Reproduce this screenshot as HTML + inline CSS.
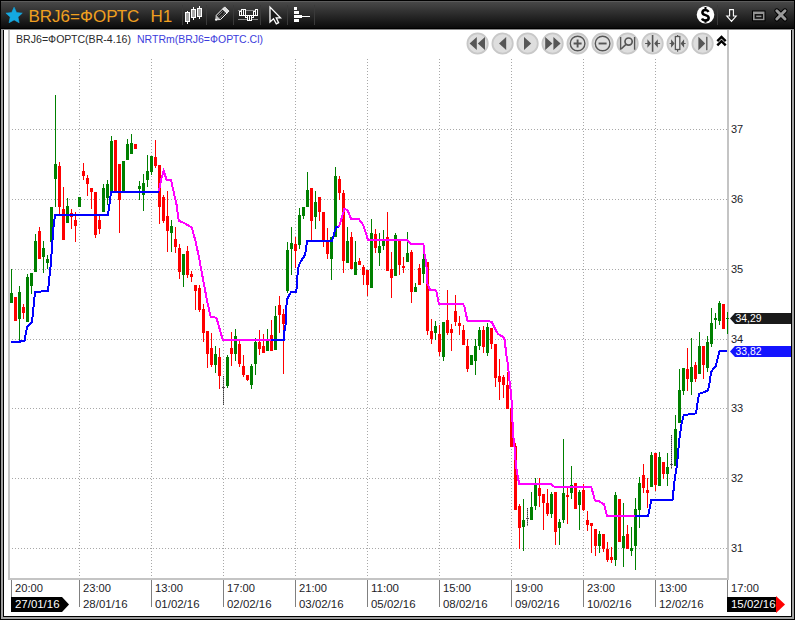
<!DOCTYPE html><html><head><meta charset="utf-8"><style>
html,body{margin:0;padding:0;background:#fff;width:795px;height:620px;overflow:hidden}
svg{display:block}
text{font-family:"Liberation Sans",sans-serif}
</style></head><body>
<svg width="795" height="620" viewBox="0 0 795 620">
<defs><linearGradient id="hg" x1="0" y1="0" x2="0" y2="1"><stop offset="0" stop-color="#4a4a4a"/><stop offset="1" stop-color="#0b0b0b"/></linearGradient></defs>
<rect x="0" y="0" width="795" height="620" fill="#000"/>
<rect x="1" y="29" width="793" height="590" fill="#a0a0a0"/>
<rect x="3" y="29" width="789" height="588" fill="#000"/>
<rect x="4" y="30" width="787" height="586" fill="#fff"/>
<rect x="1" y="29" width="793" height="1" fill="#8c8c8c"/>
<rect x="1" y="1" width="793" height="27" fill="url(#hg)"/>
<rect x="1" y="1" width="793" height="1" fill="#5c5c5c"/>
<rect x="0" y="28" width="795" height="1" fill="#000"/>
<g shape-rendering="crispEdges">
<rect x="8" y="30" width="2" height="550" fill="#c4c4c4"/>
<rect x="8" y="578" width="721" height="2" fill="#c4c4c4"/>
<rect x="727" y="30" width="2" height="550" fill="#c4c4c4"/>
<path d="M79 59h1v1h-1zM79 62h1v1h-1zM79 65h1v1h-1zM79 68h1v1h-1zM79 71h1v1h-1zM79 74h1v1h-1zM79 77h1v1h-1zM79 80h1v1h-1zM79 83h1v1h-1zM79 86h1v1h-1zM79 89h1v1h-1zM79 92h1v1h-1zM79 95h1v1h-1zM79 98h1v1h-1zM79 101h1v1h-1zM79 104h1v1h-1zM79 107h1v1h-1zM79 110h1v1h-1zM79 113h1v1h-1zM79 116h1v1h-1zM79 119h1v1h-1zM79 122h1v1h-1zM79 125h1v1h-1zM79 128h1v1h-1zM79 131h1v1h-1zM79 134h1v1h-1zM79 137h1v1h-1zM79 140h1v1h-1zM79 143h1v1h-1zM79 146h1v1h-1zM79 149h1v1h-1zM79 152h1v1h-1zM79 155h1v1h-1zM79 158h1v1h-1zM79 161h1v1h-1zM79 164h1v1h-1zM79 167h1v1h-1zM79 170h1v1h-1zM79 173h1v1h-1zM79 176h1v1h-1zM79 179h1v1h-1zM79 182h1v1h-1zM79 185h1v1h-1zM79 188h1v1h-1zM79 191h1v1h-1zM79 194h1v1h-1zM79 197h1v1h-1zM79 200h1v1h-1zM79 203h1v1h-1zM79 206h1v1h-1zM79 209h1v1h-1zM79 212h1v1h-1zM79 215h1v1h-1zM79 218h1v1h-1zM79 221h1v1h-1zM79 224h1v1h-1zM79 227h1v1h-1zM79 230h1v1h-1zM79 233h1v1h-1zM79 236h1v1h-1zM79 239h1v1h-1zM79 242h1v1h-1zM79 245h1v1h-1zM79 248h1v1h-1zM79 251h1v1h-1zM79 254h1v1h-1zM79 257h1v1h-1zM79 260h1v1h-1zM79 263h1v1h-1zM79 266h1v1h-1zM79 269h1v1h-1zM79 272h1v1h-1zM79 275h1v1h-1zM79 278h1v1h-1zM79 281h1v1h-1zM79 284h1v1h-1zM79 287h1v1h-1zM79 290h1v1h-1zM79 293h1v1h-1zM79 296h1v1h-1zM79 299h1v1h-1zM79 302h1v1h-1zM79 305h1v1h-1zM79 308h1v1h-1zM79 311h1v1h-1zM79 314h1v1h-1zM79 317h1v1h-1zM79 320h1v1h-1zM79 323h1v1h-1zM79 326h1v1h-1zM79 329h1v1h-1zM79 332h1v1h-1zM79 335h1v1h-1zM79 338h1v1h-1zM79 341h1v1h-1zM79 344h1v1h-1zM79 347h1v1h-1zM79 350h1v1h-1zM79 353h1v1h-1zM79 356h1v1h-1zM79 359h1v1h-1zM79 362h1v1h-1zM79 365h1v1h-1zM79 368h1v1h-1zM79 371h1v1h-1zM79 374h1v1h-1zM79 377h1v1h-1zM79 380h1v1h-1zM79 383h1v1h-1zM79 386h1v1h-1zM79 389h1v1h-1zM79 392h1v1h-1zM79 395h1v1h-1zM79 398h1v1h-1zM79 401h1v1h-1zM79 404h1v1h-1zM79 407h1v1h-1zM79 410h1v1h-1zM79 413h1v1h-1zM79 416h1v1h-1zM79 419h1v1h-1zM79 422h1v1h-1zM79 425h1v1h-1zM79 428h1v1h-1zM79 431h1v1h-1zM79 434h1v1h-1zM79 437h1v1h-1zM79 440h1v1h-1zM79 443h1v1h-1zM79 446h1v1h-1zM79 449h1v1h-1zM79 452h1v1h-1zM79 455h1v1h-1zM79 458h1v1h-1zM79 461h1v1h-1zM79 464h1v1h-1zM79 467h1v1h-1zM79 470h1v1h-1zM79 473h1v1h-1zM79 476h1v1h-1zM79 479h1v1h-1zM79 482h1v1h-1zM79 485h1v1h-1zM79 488h1v1h-1zM79 491h1v1h-1zM79 494h1v1h-1zM79 497h1v1h-1zM79 500h1v1h-1zM79 503h1v1h-1zM79 506h1v1h-1zM79 509h1v1h-1zM79 512h1v1h-1zM79 515h1v1h-1zM79 518h1v1h-1zM79 521h1v1h-1zM79 524h1v1h-1zM79 527h1v1h-1zM79 530h1v1h-1zM79 533h1v1h-1zM79 536h1v1h-1zM79 539h1v1h-1zM79 542h1v1h-1zM79 545h1v1h-1zM79 548h1v1h-1zM79 551h1v1h-1zM79 554h1v1h-1zM79 557h1v1h-1zM79 560h1v1h-1zM79 563h1v1h-1zM79 566h1v1h-1zM79 569h1v1h-1zM79 572h1v1h-1zM79 575h1v1h-1zM151 59h1v1h-1zM151 62h1v1h-1zM151 65h1v1h-1zM151 68h1v1h-1zM151 71h1v1h-1zM151 74h1v1h-1zM151 77h1v1h-1zM151 80h1v1h-1zM151 83h1v1h-1zM151 86h1v1h-1zM151 89h1v1h-1zM151 92h1v1h-1zM151 95h1v1h-1zM151 98h1v1h-1zM151 101h1v1h-1zM151 104h1v1h-1zM151 107h1v1h-1zM151 110h1v1h-1zM151 113h1v1h-1zM151 116h1v1h-1zM151 119h1v1h-1zM151 122h1v1h-1zM151 125h1v1h-1zM151 128h1v1h-1zM151 131h1v1h-1zM151 134h1v1h-1zM151 137h1v1h-1zM151 140h1v1h-1zM151 143h1v1h-1zM151 146h1v1h-1zM151 149h1v1h-1zM151 152h1v1h-1zM151 155h1v1h-1zM151 158h1v1h-1zM151 161h1v1h-1zM151 164h1v1h-1zM151 167h1v1h-1zM151 170h1v1h-1zM151 173h1v1h-1zM151 176h1v1h-1zM151 179h1v1h-1zM151 182h1v1h-1zM151 185h1v1h-1zM151 188h1v1h-1zM151 191h1v1h-1zM151 194h1v1h-1zM151 197h1v1h-1zM151 200h1v1h-1zM151 203h1v1h-1zM151 206h1v1h-1zM151 209h1v1h-1zM151 212h1v1h-1zM151 215h1v1h-1zM151 218h1v1h-1zM151 221h1v1h-1zM151 224h1v1h-1zM151 227h1v1h-1zM151 230h1v1h-1zM151 233h1v1h-1zM151 236h1v1h-1zM151 239h1v1h-1zM151 242h1v1h-1zM151 245h1v1h-1zM151 248h1v1h-1zM151 251h1v1h-1zM151 254h1v1h-1zM151 257h1v1h-1zM151 260h1v1h-1zM151 263h1v1h-1zM151 266h1v1h-1zM151 269h1v1h-1zM151 272h1v1h-1zM151 275h1v1h-1zM151 278h1v1h-1zM151 281h1v1h-1zM151 284h1v1h-1zM151 287h1v1h-1zM151 290h1v1h-1zM151 293h1v1h-1zM151 296h1v1h-1zM151 299h1v1h-1zM151 302h1v1h-1zM151 305h1v1h-1zM151 308h1v1h-1zM151 311h1v1h-1zM151 314h1v1h-1zM151 317h1v1h-1zM151 320h1v1h-1zM151 323h1v1h-1zM151 326h1v1h-1zM151 329h1v1h-1zM151 332h1v1h-1zM151 335h1v1h-1zM151 338h1v1h-1zM151 341h1v1h-1zM151 344h1v1h-1zM151 347h1v1h-1zM151 350h1v1h-1zM151 353h1v1h-1zM151 356h1v1h-1zM151 359h1v1h-1zM151 362h1v1h-1zM151 365h1v1h-1zM151 368h1v1h-1zM151 371h1v1h-1zM151 374h1v1h-1zM151 377h1v1h-1zM151 380h1v1h-1zM151 383h1v1h-1zM151 386h1v1h-1zM151 389h1v1h-1zM151 392h1v1h-1zM151 395h1v1h-1zM151 398h1v1h-1zM151 401h1v1h-1zM151 404h1v1h-1zM151 407h1v1h-1zM151 410h1v1h-1zM151 413h1v1h-1zM151 416h1v1h-1zM151 419h1v1h-1zM151 422h1v1h-1zM151 425h1v1h-1zM151 428h1v1h-1zM151 431h1v1h-1zM151 434h1v1h-1zM151 437h1v1h-1zM151 440h1v1h-1zM151 443h1v1h-1zM151 446h1v1h-1zM151 449h1v1h-1zM151 452h1v1h-1zM151 455h1v1h-1zM151 458h1v1h-1zM151 461h1v1h-1zM151 464h1v1h-1zM151 467h1v1h-1zM151 470h1v1h-1zM151 473h1v1h-1zM151 476h1v1h-1zM151 479h1v1h-1zM151 482h1v1h-1zM151 485h1v1h-1zM151 488h1v1h-1zM151 491h1v1h-1zM151 494h1v1h-1zM151 497h1v1h-1zM151 500h1v1h-1zM151 503h1v1h-1zM151 506h1v1h-1zM151 509h1v1h-1zM151 512h1v1h-1zM151 515h1v1h-1zM151 518h1v1h-1zM151 521h1v1h-1zM151 524h1v1h-1zM151 527h1v1h-1zM151 530h1v1h-1zM151 533h1v1h-1zM151 536h1v1h-1zM151 539h1v1h-1zM151 542h1v1h-1zM151 545h1v1h-1zM151 548h1v1h-1zM151 551h1v1h-1zM151 554h1v1h-1zM151 557h1v1h-1zM151 560h1v1h-1zM151 563h1v1h-1zM151 566h1v1h-1zM151 569h1v1h-1zM151 572h1v1h-1zM151 575h1v1h-1zM223 59h1v1h-1zM223 62h1v1h-1zM223 65h1v1h-1zM223 68h1v1h-1zM223 71h1v1h-1zM223 74h1v1h-1zM223 77h1v1h-1zM223 80h1v1h-1zM223 83h1v1h-1zM223 86h1v1h-1zM223 89h1v1h-1zM223 92h1v1h-1zM223 95h1v1h-1zM223 98h1v1h-1zM223 101h1v1h-1zM223 104h1v1h-1zM223 107h1v1h-1zM223 110h1v1h-1zM223 113h1v1h-1zM223 116h1v1h-1zM223 119h1v1h-1zM223 122h1v1h-1zM223 125h1v1h-1zM223 128h1v1h-1zM223 131h1v1h-1zM223 134h1v1h-1zM223 137h1v1h-1zM223 140h1v1h-1zM223 143h1v1h-1zM223 146h1v1h-1zM223 149h1v1h-1zM223 152h1v1h-1zM223 155h1v1h-1zM223 158h1v1h-1zM223 161h1v1h-1zM223 164h1v1h-1zM223 167h1v1h-1zM223 170h1v1h-1zM223 173h1v1h-1zM223 176h1v1h-1zM223 179h1v1h-1zM223 182h1v1h-1zM223 185h1v1h-1zM223 188h1v1h-1zM223 191h1v1h-1zM223 194h1v1h-1zM223 197h1v1h-1zM223 200h1v1h-1zM223 203h1v1h-1zM223 206h1v1h-1zM223 209h1v1h-1zM223 212h1v1h-1zM223 215h1v1h-1zM223 218h1v1h-1zM223 221h1v1h-1zM223 224h1v1h-1zM223 227h1v1h-1zM223 230h1v1h-1zM223 233h1v1h-1zM223 236h1v1h-1zM223 239h1v1h-1zM223 242h1v1h-1zM223 245h1v1h-1zM223 248h1v1h-1zM223 251h1v1h-1zM223 254h1v1h-1zM223 257h1v1h-1zM223 260h1v1h-1zM223 263h1v1h-1zM223 266h1v1h-1zM223 269h1v1h-1zM223 272h1v1h-1zM223 275h1v1h-1zM223 278h1v1h-1zM223 281h1v1h-1zM223 284h1v1h-1zM223 287h1v1h-1zM223 290h1v1h-1zM223 293h1v1h-1zM223 296h1v1h-1zM223 299h1v1h-1zM223 302h1v1h-1zM223 305h1v1h-1zM223 308h1v1h-1zM223 311h1v1h-1zM223 314h1v1h-1zM223 317h1v1h-1zM223 320h1v1h-1zM223 323h1v1h-1zM223 326h1v1h-1zM223 329h1v1h-1zM223 332h1v1h-1zM223 335h1v1h-1zM223 338h1v1h-1zM223 341h1v1h-1zM223 344h1v1h-1zM223 347h1v1h-1zM223 350h1v1h-1zM223 353h1v1h-1zM223 356h1v1h-1zM223 359h1v1h-1zM223 362h1v1h-1zM223 365h1v1h-1zM223 368h1v1h-1zM223 371h1v1h-1zM223 374h1v1h-1zM223 377h1v1h-1zM223 380h1v1h-1zM223 383h1v1h-1zM223 386h1v1h-1zM223 389h1v1h-1zM223 392h1v1h-1zM223 395h1v1h-1zM223 398h1v1h-1zM223 401h1v1h-1zM223 404h1v1h-1zM223 407h1v1h-1zM223 410h1v1h-1zM223 413h1v1h-1zM223 416h1v1h-1zM223 419h1v1h-1zM223 422h1v1h-1zM223 425h1v1h-1zM223 428h1v1h-1zM223 431h1v1h-1zM223 434h1v1h-1zM223 437h1v1h-1zM223 440h1v1h-1zM223 443h1v1h-1zM223 446h1v1h-1zM223 449h1v1h-1zM223 452h1v1h-1zM223 455h1v1h-1zM223 458h1v1h-1zM223 461h1v1h-1zM223 464h1v1h-1zM223 467h1v1h-1zM223 470h1v1h-1zM223 473h1v1h-1zM223 476h1v1h-1zM223 479h1v1h-1zM223 482h1v1h-1zM223 485h1v1h-1zM223 488h1v1h-1zM223 491h1v1h-1zM223 494h1v1h-1zM223 497h1v1h-1zM223 500h1v1h-1zM223 503h1v1h-1zM223 506h1v1h-1zM223 509h1v1h-1zM223 512h1v1h-1zM223 515h1v1h-1zM223 518h1v1h-1zM223 521h1v1h-1zM223 524h1v1h-1zM223 527h1v1h-1zM223 530h1v1h-1zM223 533h1v1h-1zM223 536h1v1h-1zM223 539h1v1h-1zM223 542h1v1h-1zM223 545h1v1h-1zM223 548h1v1h-1zM223 551h1v1h-1zM223 554h1v1h-1zM223 557h1v1h-1zM223 560h1v1h-1zM223 563h1v1h-1zM223 566h1v1h-1zM223 569h1v1h-1zM223 572h1v1h-1zM223 575h1v1h-1zM295 59h1v1h-1zM295 62h1v1h-1zM295 65h1v1h-1zM295 68h1v1h-1zM295 71h1v1h-1zM295 74h1v1h-1zM295 77h1v1h-1zM295 80h1v1h-1zM295 83h1v1h-1zM295 86h1v1h-1zM295 89h1v1h-1zM295 92h1v1h-1zM295 95h1v1h-1zM295 98h1v1h-1zM295 101h1v1h-1zM295 104h1v1h-1zM295 107h1v1h-1zM295 110h1v1h-1zM295 113h1v1h-1zM295 116h1v1h-1zM295 119h1v1h-1zM295 122h1v1h-1zM295 125h1v1h-1zM295 128h1v1h-1zM295 131h1v1h-1zM295 134h1v1h-1zM295 137h1v1h-1zM295 140h1v1h-1zM295 143h1v1h-1zM295 146h1v1h-1zM295 149h1v1h-1zM295 152h1v1h-1zM295 155h1v1h-1zM295 158h1v1h-1zM295 161h1v1h-1zM295 164h1v1h-1zM295 167h1v1h-1zM295 170h1v1h-1zM295 173h1v1h-1zM295 176h1v1h-1zM295 179h1v1h-1zM295 182h1v1h-1zM295 185h1v1h-1zM295 188h1v1h-1zM295 191h1v1h-1zM295 194h1v1h-1zM295 197h1v1h-1zM295 200h1v1h-1zM295 203h1v1h-1zM295 206h1v1h-1zM295 209h1v1h-1zM295 212h1v1h-1zM295 215h1v1h-1zM295 218h1v1h-1zM295 221h1v1h-1zM295 224h1v1h-1zM295 227h1v1h-1zM295 230h1v1h-1zM295 233h1v1h-1zM295 236h1v1h-1zM295 239h1v1h-1zM295 242h1v1h-1zM295 245h1v1h-1zM295 248h1v1h-1zM295 251h1v1h-1zM295 254h1v1h-1zM295 257h1v1h-1zM295 260h1v1h-1zM295 263h1v1h-1zM295 266h1v1h-1zM295 269h1v1h-1zM295 272h1v1h-1zM295 275h1v1h-1zM295 278h1v1h-1zM295 281h1v1h-1zM295 284h1v1h-1zM295 287h1v1h-1zM295 290h1v1h-1zM295 293h1v1h-1zM295 296h1v1h-1zM295 299h1v1h-1zM295 302h1v1h-1zM295 305h1v1h-1zM295 308h1v1h-1zM295 311h1v1h-1zM295 314h1v1h-1zM295 317h1v1h-1zM295 320h1v1h-1zM295 323h1v1h-1zM295 326h1v1h-1zM295 329h1v1h-1zM295 332h1v1h-1zM295 335h1v1h-1zM295 338h1v1h-1zM295 341h1v1h-1zM295 344h1v1h-1zM295 347h1v1h-1zM295 350h1v1h-1zM295 353h1v1h-1zM295 356h1v1h-1zM295 359h1v1h-1zM295 362h1v1h-1zM295 365h1v1h-1zM295 368h1v1h-1zM295 371h1v1h-1zM295 374h1v1h-1zM295 377h1v1h-1zM295 380h1v1h-1zM295 383h1v1h-1zM295 386h1v1h-1zM295 389h1v1h-1zM295 392h1v1h-1zM295 395h1v1h-1zM295 398h1v1h-1zM295 401h1v1h-1zM295 404h1v1h-1zM295 407h1v1h-1zM295 410h1v1h-1zM295 413h1v1h-1zM295 416h1v1h-1zM295 419h1v1h-1zM295 422h1v1h-1zM295 425h1v1h-1zM295 428h1v1h-1zM295 431h1v1h-1zM295 434h1v1h-1zM295 437h1v1h-1zM295 440h1v1h-1zM295 443h1v1h-1zM295 446h1v1h-1zM295 449h1v1h-1zM295 452h1v1h-1zM295 455h1v1h-1zM295 458h1v1h-1zM295 461h1v1h-1zM295 464h1v1h-1zM295 467h1v1h-1zM295 470h1v1h-1zM295 473h1v1h-1zM295 476h1v1h-1zM295 479h1v1h-1zM295 482h1v1h-1zM295 485h1v1h-1zM295 488h1v1h-1zM295 491h1v1h-1zM295 494h1v1h-1zM295 497h1v1h-1zM295 500h1v1h-1zM295 503h1v1h-1zM295 506h1v1h-1zM295 509h1v1h-1zM295 512h1v1h-1zM295 515h1v1h-1zM295 518h1v1h-1zM295 521h1v1h-1zM295 524h1v1h-1zM295 527h1v1h-1zM295 530h1v1h-1zM295 533h1v1h-1zM295 536h1v1h-1zM295 539h1v1h-1zM295 542h1v1h-1zM295 545h1v1h-1zM295 548h1v1h-1zM295 551h1v1h-1zM295 554h1v1h-1zM295 557h1v1h-1zM295 560h1v1h-1zM295 563h1v1h-1zM295 566h1v1h-1zM295 569h1v1h-1zM295 572h1v1h-1zM295 575h1v1h-1zM367 59h1v1h-1zM367 62h1v1h-1zM367 65h1v1h-1zM367 68h1v1h-1zM367 71h1v1h-1zM367 74h1v1h-1zM367 77h1v1h-1zM367 80h1v1h-1zM367 83h1v1h-1zM367 86h1v1h-1zM367 89h1v1h-1zM367 92h1v1h-1zM367 95h1v1h-1zM367 98h1v1h-1zM367 101h1v1h-1zM367 104h1v1h-1zM367 107h1v1h-1zM367 110h1v1h-1zM367 113h1v1h-1zM367 116h1v1h-1zM367 119h1v1h-1zM367 122h1v1h-1zM367 125h1v1h-1zM367 128h1v1h-1zM367 131h1v1h-1zM367 134h1v1h-1zM367 137h1v1h-1zM367 140h1v1h-1zM367 143h1v1h-1zM367 146h1v1h-1zM367 149h1v1h-1zM367 152h1v1h-1zM367 155h1v1h-1zM367 158h1v1h-1zM367 161h1v1h-1zM367 164h1v1h-1zM367 167h1v1h-1zM367 170h1v1h-1zM367 173h1v1h-1zM367 176h1v1h-1zM367 179h1v1h-1zM367 182h1v1h-1zM367 185h1v1h-1zM367 188h1v1h-1zM367 191h1v1h-1zM367 194h1v1h-1zM367 197h1v1h-1zM367 200h1v1h-1zM367 203h1v1h-1zM367 206h1v1h-1zM367 209h1v1h-1zM367 212h1v1h-1zM367 215h1v1h-1zM367 218h1v1h-1zM367 221h1v1h-1zM367 224h1v1h-1zM367 227h1v1h-1zM367 230h1v1h-1zM367 233h1v1h-1zM367 236h1v1h-1zM367 239h1v1h-1zM367 242h1v1h-1zM367 245h1v1h-1zM367 248h1v1h-1zM367 251h1v1h-1zM367 254h1v1h-1zM367 257h1v1h-1zM367 260h1v1h-1zM367 263h1v1h-1zM367 266h1v1h-1zM367 269h1v1h-1zM367 272h1v1h-1zM367 275h1v1h-1zM367 278h1v1h-1zM367 281h1v1h-1zM367 284h1v1h-1zM367 287h1v1h-1zM367 290h1v1h-1zM367 293h1v1h-1zM367 296h1v1h-1zM367 299h1v1h-1zM367 302h1v1h-1zM367 305h1v1h-1zM367 308h1v1h-1zM367 311h1v1h-1zM367 314h1v1h-1zM367 317h1v1h-1zM367 320h1v1h-1zM367 323h1v1h-1zM367 326h1v1h-1zM367 329h1v1h-1zM367 332h1v1h-1zM367 335h1v1h-1zM367 338h1v1h-1zM367 341h1v1h-1zM367 344h1v1h-1zM367 347h1v1h-1zM367 350h1v1h-1zM367 353h1v1h-1zM367 356h1v1h-1zM367 359h1v1h-1zM367 362h1v1h-1zM367 365h1v1h-1zM367 368h1v1h-1zM367 371h1v1h-1zM367 374h1v1h-1zM367 377h1v1h-1zM367 380h1v1h-1zM367 383h1v1h-1zM367 386h1v1h-1zM367 389h1v1h-1zM367 392h1v1h-1zM367 395h1v1h-1zM367 398h1v1h-1zM367 401h1v1h-1zM367 404h1v1h-1zM367 407h1v1h-1zM367 410h1v1h-1zM367 413h1v1h-1zM367 416h1v1h-1zM367 419h1v1h-1zM367 422h1v1h-1zM367 425h1v1h-1zM367 428h1v1h-1zM367 431h1v1h-1zM367 434h1v1h-1zM367 437h1v1h-1zM367 440h1v1h-1zM367 443h1v1h-1zM367 446h1v1h-1zM367 449h1v1h-1zM367 452h1v1h-1zM367 455h1v1h-1zM367 458h1v1h-1zM367 461h1v1h-1zM367 464h1v1h-1zM367 467h1v1h-1zM367 470h1v1h-1zM367 473h1v1h-1zM367 476h1v1h-1zM367 479h1v1h-1zM367 482h1v1h-1zM367 485h1v1h-1zM367 488h1v1h-1zM367 491h1v1h-1zM367 494h1v1h-1zM367 497h1v1h-1zM367 500h1v1h-1zM367 503h1v1h-1zM367 506h1v1h-1zM367 509h1v1h-1zM367 512h1v1h-1zM367 515h1v1h-1zM367 518h1v1h-1zM367 521h1v1h-1zM367 524h1v1h-1zM367 527h1v1h-1zM367 530h1v1h-1zM367 533h1v1h-1zM367 536h1v1h-1zM367 539h1v1h-1zM367 542h1v1h-1zM367 545h1v1h-1zM367 548h1v1h-1zM367 551h1v1h-1zM367 554h1v1h-1zM367 557h1v1h-1zM367 560h1v1h-1zM367 563h1v1h-1zM367 566h1v1h-1zM367 569h1v1h-1zM367 572h1v1h-1zM367 575h1v1h-1zM439 59h1v1h-1zM439 62h1v1h-1zM439 65h1v1h-1zM439 68h1v1h-1zM439 71h1v1h-1zM439 74h1v1h-1zM439 77h1v1h-1zM439 80h1v1h-1zM439 83h1v1h-1zM439 86h1v1h-1zM439 89h1v1h-1zM439 92h1v1h-1zM439 95h1v1h-1zM439 98h1v1h-1zM439 101h1v1h-1zM439 104h1v1h-1zM439 107h1v1h-1zM439 110h1v1h-1zM439 113h1v1h-1zM439 116h1v1h-1zM439 119h1v1h-1zM439 122h1v1h-1zM439 125h1v1h-1zM439 128h1v1h-1zM439 131h1v1h-1zM439 134h1v1h-1zM439 137h1v1h-1zM439 140h1v1h-1zM439 143h1v1h-1zM439 146h1v1h-1zM439 149h1v1h-1zM439 152h1v1h-1zM439 155h1v1h-1zM439 158h1v1h-1zM439 161h1v1h-1zM439 164h1v1h-1zM439 167h1v1h-1zM439 170h1v1h-1zM439 173h1v1h-1zM439 176h1v1h-1zM439 179h1v1h-1zM439 182h1v1h-1zM439 185h1v1h-1zM439 188h1v1h-1zM439 191h1v1h-1zM439 194h1v1h-1zM439 197h1v1h-1zM439 200h1v1h-1zM439 203h1v1h-1zM439 206h1v1h-1zM439 209h1v1h-1zM439 212h1v1h-1zM439 215h1v1h-1zM439 218h1v1h-1zM439 221h1v1h-1zM439 224h1v1h-1zM439 227h1v1h-1zM439 230h1v1h-1zM439 233h1v1h-1zM439 236h1v1h-1zM439 239h1v1h-1zM439 242h1v1h-1zM439 245h1v1h-1zM439 248h1v1h-1zM439 251h1v1h-1zM439 254h1v1h-1zM439 257h1v1h-1zM439 260h1v1h-1zM439 263h1v1h-1zM439 266h1v1h-1zM439 269h1v1h-1zM439 272h1v1h-1zM439 275h1v1h-1zM439 278h1v1h-1zM439 281h1v1h-1zM439 284h1v1h-1zM439 287h1v1h-1zM439 290h1v1h-1zM439 293h1v1h-1zM439 296h1v1h-1zM439 299h1v1h-1zM439 302h1v1h-1zM439 305h1v1h-1zM439 308h1v1h-1zM439 311h1v1h-1zM439 314h1v1h-1zM439 317h1v1h-1zM439 320h1v1h-1zM439 323h1v1h-1zM439 326h1v1h-1zM439 329h1v1h-1zM439 332h1v1h-1zM439 335h1v1h-1zM439 338h1v1h-1zM439 341h1v1h-1zM439 344h1v1h-1zM439 347h1v1h-1zM439 350h1v1h-1zM439 353h1v1h-1zM439 356h1v1h-1zM439 359h1v1h-1zM439 362h1v1h-1zM439 365h1v1h-1zM439 368h1v1h-1zM439 371h1v1h-1zM439 374h1v1h-1zM439 377h1v1h-1zM439 380h1v1h-1zM439 383h1v1h-1zM439 386h1v1h-1zM439 389h1v1h-1zM439 392h1v1h-1zM439 395h1v1h-1zM439 398h1v1h-1zM439 401h1v1h-1zM439 404h1v1h-1zM439 407h1v1h-1zM439 410h1v1h-1zM439 413h1v1h-1zM439 416h1v1h-1zM439 419h1v1h-1zM439 422h1v1h-1zM439 425h1v1h-1zM439 428h1v1h-1zM439 431h1v1h-1zM439 434h1v1h-1zM439 437h1v1h-1zM439 440h1v1h-1zM439 443h1v1h-1zM439 446h1v1h-1zM439 449h1v1h-1zM439 452h1v1h-1zM439 455h1v1h-1zM439 458h1v1h-1zM439 461h1v1h-1zM439 464h1v1h-1zM439 467h1v1h-1zM439 470h1v1h-1zM439 473h1v1h-1zM439 476h1v1h-1zM439 479h1v1h-1zM439 482h1v1h-1zM439 485h1v1h-1zM439 488h1v1h-1zM439 491h1v1h-1zM439 494h1v1h-1zM439 497h1v1h-1zM439 500h1v1h-1zM439 503h1v1h-1zM439 506h1v1h-1zM439 509h1v1h-1zM439 512h1v1h-1zM439 515h1v1h-1zM439 518h1v1h-1zM439 521h1v1h-1zM439 524h1v1h-1zM439 527h1v1h-1zM439 530h1v1h-1zM439 533h1v1h-1zM439 536h1v1h-1zM439 539h1v1h-1zM439 542h1v1h-1zM439 545h1v1h-1zM439 548h1v1h-1zM439 551h1v1h-1zM439 554h1v1h-1zM439 557h1v1h-1zM439 560h1v1h-1zM439 563h1v1h-1zM439 566h1v1h-1zM439 569h1v1h-1zM439 572h1v1h-1zM439 575h1v1h-1zM511 59h1v1h-1zM511 62h1v1h-1zM511 65h1v1h-1zM511 68h1v1h-1zM511 71h1v1h-1zM511 74h1v1h-1zM511 77h1v1h-1zM511 80h1v1h-1zM511 83h1v1h-1zM511 86h1v1h-1zM511 89h1v1h-1zM511 92h1v1h-1zM511 95h1v1h-1zM511 98h1v1h-1zM511 101h1v1h-1zM511 104h1v1h-1zM511 107h1v1h-1zM511 110h1v1h-1zM511 113h1v1h-1zM511 116h1v1h-1zM511 119h1v1h-1zM511 122h1v1h-1zM511 125h1v1h-1zM511 128h1v1h-1zM511 131h1v1h-1zM511 134h1v1h-1zM511 137h1v1h-1zM511 140h1v1h-1zM511 143h1v1h-1zM511 146h1v1h-1zM511 149h1v1h-1zM511 152h1v1h-1zM511 155h1v1h-1zM511 158h1v1h-1zM511 161h1v1h-1zM511 164h1v1h-1zM511 167h1v1h-1zM511 170h1v1h-1zM511 173h1v1h-1zM511 176h1v1h-1zM511 179h1v1h-1zM511 182h1v1h-1zM511 185h1v1h-1zM511 188h1v1h-1zM511 191h1v1h-1zM511 194h1v1h-1zM511 197h1v1h-1zM511 200h1v1h-1zM511 203h1v1h-1zM511 206h1v1h-1zM511 209h1v1h-1zM511 212h1v1h-1zM511 215h1v1h-1zM511 218h1v1h-1zM511 221h1v1h-1zM511 224h1v1h-1zM511 227h1v1h-1zM511 230h1v1h-1zM511 233h1v1h-1zM511 236h1v1h-1zM511 239h1v1h-1zM511 242h1v1h-1zM511 245h1v1h-1zM511 248h1v1h-1zM511 251h1v1h-1zM511 254h1v1h-1zM511 257h1v1h-1zM511 260h1v1h-1zM511 263h1v1h-1zM511 266h1v1h-1zM511 269h1v1h-1zM511 272h1v1h-1zM511 275h1v1h-1zM511 278h1v1h-1zM511 281h1v1h-1zM511 284h1v1h-1zM511 287h1v1h-1zM511 290h1v1h-1zM511 293h1v1h-1zM511 296h1v1h-1zM511 299h1v1h-1zM511 302h1v1h-1zM511 305h1v1h-1zM511 308h1v1h-1zM511 311h1v1h-1zM511 314h1v1h-1zM511 317h1v1h-1zM511 320h1v1h-1zM511 323h1v1h-1zM511 326h1v1h-1zM511 329h1v1h-1zM511 332h1v1h-1zM511 335h1v1h-1zM511 338h1v1h-1zM511 341h1v1h-1zM511 344h1v1h-1zM511 347h1v1h-1zM511 350h1v1h-1zM511 353h1v1h-1zM511 356h1v1h-1zM511 359h1v1h-1zM511 362h1v1h-1zM511 365h1v1h-1zM511 368h1v1h-1zM511 371h1v1h-1zM511 374h1v1h-1zM511 377h1v1h-1zM511 380h1v1h-1zM511 383h1v1h-1zM511 386h1v1h-1zM511 389h1v1h-1zM511 392h1v1h-1zM511 395h1v1h-1zM511 398h1v1h-1zM511 401h1v1h-1zM511 404h1v1h-1zM511 407h1v1h-1zM511 410h1v1h-1zM511 413h1v1h-1zM511 416h1v1h-1zM511 419h1v1h-1zM511 422h1v1h-1zM511 425h1v1h-1zM511 428h1v1h-1zM511 431h1v1h-1zM511 434h1v1h-1zM511 437h1v1h-1zM511 440h1v1h-1zM511 443h1v1h-1zM511 446h1v1h-1zM511 449h1v1h-1zM511 452h1v1h-1zM511 455h1v1h-1zM511 458h1v1h-1zM511 461h1v1h-1zM511 464h1v1h-1zM511 467h1v1h-1zM511 470h1v1h-1zM511 473h1v1h-1zM511 476h1v1h-1zM511 479h1v1h-1zM511 482h1v1h-1zM511 485h1v1h-1zM511 488h1v1h-1zM511 491h1v1h-1zM511 494h1v1h-1zM511 497h1v1h-1zM511 500h1v1h-1zM511 503h1v1h-1zM511 506h1v1h-1zM511 509h1v1h-1zM511 512h1v1h-1zM511 515h1v1h-1zM511 518h1v1h-1zM511 521h1v1h-1zM511 524h1v1h-1zM511 527h1v1h-1zM511 530h1v1h-1zM511 533h1v1h-1zM511 536h1v1h-1zM511 539h1v1h-1zM511 542h1v1h-1zM511 545h1v1h-1zM511 548h1v1h-1zM511 551h1v1h-1zM511 554h1v1h-1zM511 557h1v1h-1zM511 560h1v1h-1zM511 563h1v1h-1zM511 566h1v1h-1zM511 569h1v1h-1zM511 572h1v1h-1zM511 575h1v1h-1zM583 59h1v1h-1zM583 62h1v1h-1zM583 65h1v1h-1zM583 68h1v1h-1zM583 71h1v1h-1zM583 74h1v1h-1zM583 77h1v1h-1zM583 80h1v1h-1zM583 83h1v1h-1zM583 86h1v1h-1zM583 89h1v1h-1zM583 92h1v1h-1zM583 95h1v1h-1zM583 98h1v1h-1zM583 101h1v1h-1zM583 104h1v1h-1zM583 107h1v1h-1zM583 110h1v1h-1zM583 113h1v1h-1zM583 116h1v1h-1zM583 119h1v1h-1zM583 122h1v1h-1zM583 125h1v1h-1zM583 128h1v1h-1zM583 131h1v1h-1zM583 134h1v1h-1zM583 137h1v1h-1zM583 140h1v1h-1zM583 143h1v1h-1zM583 146h1v1h-1zM583 149h1v1h-1zM583 152h1v1h-1zM583 155h1v1h-1zM583 158h1v1h-1zM583 161h1v1h-1zM583 164h1v1h-1zM583 167h1v1h-1zM583 170h1v1h-1zM583 173h1v1h-1zM583 176h1v1h-1zM583 179h1v1h-1zM583 182h1v1h-1zM583 185h1v1h-1zM583 188h1v1h-1zM583 191h1v1h-1zM583 194h1v1h-1zM583 197h1v1h-1zM583 200h1v1h-1zM583 203h1v1h-1zM583 206h1v1h-1zM583 209h1v1h-1zM583 212h1v1h-1zM583 215h1v1h-1zM583 218h1v1h-1zM583 221h1v1h-1zM583 224h1v1h-1zM583 227h1v1h-1zM583 230h1v1h-1zM583 233h1v1h-1zM583 236h1v1h-1zM583 239h1v1h-1zM583 242h1v1h-1zM583 245h1v1h-1zM583 248h1v1h-1zM583 251h1v1h-1zM583 254h1v1h-1zM583 257h1v1h-1zM583 260h1v1h-1zM583 263h1v1h-1zM583 266h1v1h-1zM583 269h1v1h-1zM583 272h1v1h-1zM583 275h1v1h-1zM583 278h1v1h-1zM583 281h1v1h-1zM583 284h1v1h-1zM583 287h1v1h-1zM583 290h1v1h-1zM583 293h1v1h-1zM583 296h1v1h-1zM583 299h1v1h-1zM583 302h1v1h-1zM583 305h1v1h-1zM583 308h1v1h-1zM583 311h1v1h-1zM583 314h1v1h-1zM583 317h1v1h-1zM583 320h1v1h-1zM583 323h1v1h-1zM583 326h1v1h-1zM583 329h1v1h-1zM583 332h1v1h-1zM583 335h1v1h-1zM583 338h1v1h-1zM583 341h1v1h-1zM583 344h1v1h-1zM583 347h1v1h-1zM583 350h1v1h-1zM583 353h1v1h-1zM583 356h1v1h-1zM583 359h1v1h-1zM583 362h1v1h-1zM583 365h1v1h-1zM583 368h1v1h-1zM583 371h1v1h-1zM583 374h1v1h-1zM583 377h1v1h-1zM583 380h1v1h-1zM583 383h1v1h-1zM583 386h1v1h-1zM583 389h1v1h-1zM583 392h1v1h-1zM583 395h1v1h-1zM583 398h1v1h-1zM583 401h1v1h-1zM583 404h1v1h-1zM583 407h1v1h-1zM583 410h1v1h-1zM583 413h1v1h-1zM583 416h1v1h-1zM583 419h1v1h-1zM583 422h1v1h-1zM583 425h1v1h-1zM583 428h1v1h-1zM583 431h1v1h-1zM583 434h1v1h-1zM583 437h1v1h-1zM583 440h1v1h-1zM583 443h1v1h-1zM583 446h1v1h-1zM583 449h1v1h-1zM583 452h1v1h-1zM583 455h1v1h-1zM583 458h1v1h-1zM583 461h1v1h-1zM583 464h1v1h-1zM583 467h1v1h-1zM583 470h1v1h-1zM583 473h1v1h-1zM583 476h1v1h-1zM583 479h1v1h-1zM583 482h1v1h-1zM583 485h1v1h-1zM583 488h1v1h-1zM583 491h1v1h-1zM583 494h1v1h-1zM583 497h1v1h-1zM583 500h1v1h-1zM583 503h1v1h-1zM583 506h1v1h-1zM583 509h1v1h-1zM583 512h1v1h-1zM583 515h1v1h-1zM583 518h1v1h-1zM583 521h1v1h-1zM583 524h1v1h-1zM583 527h1v1h-1zM583 530h1v1h-1zM583 533h1v1h-1zM583 536h1v1h-1zM583 539h1v1h-1zM583 542h1v1h-1zM583 545h1v1h-1zM583 548h1v1h-1zM583 551h1v1h-1zM583 554h1v1h-1zM583 557h1v1h-1zM583 560h1v1h-1zM583 563h1v1h-1zM583 566h1v1h-1zM583 569h1v1h-1zM583 572h1v1h-1zM583 575h1v1h-1zM655 59h1v1h-1zM655 62h1v1h-1zM655 65h1v1h-1zM655 68h1v1h-1zM655 71h1v1h-1zM655 74h1v1h-1zM655 77h1v1h-1zM655 80h1v1h-1zM655 83h1v1h-1zM655 86h1v1h-1zM655 89h1v1h-1zM655 92h1v1h-1zM655 95h1v1h-1zM655 98h1v1h-1zM655 101h1v1h-1zM655 104h1v1h-1zM655 107h1v1h-1zM655 110h1v1h-1zM655 113h1v1h-1zM655 116h1v1h-1zM655 119h1v1h-1zM655 122h1v1h-1zM655 125h1v1h-1zM655 128h1v1h-1zM655 131h1v1h-1zM655 134h1v1h-1zM655 137h1v1h-1zM655 140h1v1h-1zM655 143h1v1h-1zM655 146h1v1h-1zM655 149h1v1h-1zM655 152h1v1h-1zM655 155h1v1h-1zM655 158h1v1h-1zM655 161h1v1h-1zM655 164h1v1h-1zM655 167h1v1h-1zM655 170h1v1h-1zM655 173h1v1h-1zM655 176h1v1h-1zM655 179h1v1h-1zM655 182h1v1h-1zM655 185h1v1h-1zM655 188h1v1h-1zM655 191h1v1h-1zM655 194h1v1h-1zM655 197h1v1h-1zM655 200h1v1h-1zM655 203h1v1h-1zM655 206h1v1h-1zM655 209h1v1h-1zM655 212h1v1h-1zM655 215h1v1h-1zM655 218h1v1h-1zM655 221h1v1h-1zM655 224h1v1h-1zM655 227h1v1h-1zM655 230h1v1h-1zM655 233h1v1h-1zM655 236h1v1h-1zM655 239h1v1h-1zM655 242h1v1h-1zM655 245h1v1h-1zM655 248h1v1h-1zM655 251h1v1h-1zM655 254h1v1h-1zM655 257h1v1h-1zM655 260h1v1h-1zM655 263h1v1h-1zM655 266h1v1h-1zM655 269h1v1h-1zM655 272h1v1h-1zM655 275h1v1h-1zM655 278h1v1h-1zM655 281h1v1h-1zM655 284h1v1h-1zM655 287h1v1h-1zM655 290h1v1h-1zM655 293h1v1h-1zM655 296h1v1h-1zM655 299h1v1h-1zM655 302h1v1h-1zM655 305h1v1h-1zM655 308h1v1h-1zM655 311h1v1h-1zM655 314h1v1h-1zM655 317h1v1h-1zM655 320h1v1h-1zM655 323h1v1h-1zM655 326h1v1h-1zM655 329h1v1h-1zM655 332h1v1h-1zM655 335h1v1h-1zM655 338h1v1h-1zM655 341h1v1h-1zM655 344h1v1h-1zM655 347h1v1h-1zM655 350h1v1h-1zM655 353h1v1h-1zM655 356h1v1h-1zM655 359h1v1h-1zM655 362h1v1h-1zM655 365h1v1h-1zM655 368h1v1h-1zM655 371h1v1h-1zM655 374h1v1h-1zM655 377h1v1h-1zM655 380h1v1h-1zM655 383h1v1h-1zM655 386h1v1h-1zM655 389h1v1h-1zM655 392h1v1h-1zM655 395h1v1h-1zM655 398h1v1h-1zM655 401h1v1h-1zM655 404h1v1h-1zM655 407h1v1h-1zM655 410h1v1h-1zM655 413h1v1h-1zM655 416h1v1h-1zM655 419h1v1h-1zM655 422h1v1h-1zM655 425h1v1h-1zM655 428h1v1h-1zM655 431h1v1h-1zM655 434h1v1h-1zM655 437h1v1h-1zM655 440h1v1h-1zM655 443h1v1h-1zM655 446h1v1h-1zM655 449h1v1h-1zM655 452h1v1h-1zM655 455h1v1h-1zM655 458h1v1h-1zM655 461h1v1h-1zM655 464h1v1h-1zM655 467h1v1h-1zM655 470h1v1h-1zM655 473h1v1h-1zM655 476h1v1h-1zM655 479h1v1h-1zM655 482h1v1h-1zM655 485h1v1h-1zM655 488h1v1h-1zM655 491h1v1h-1zM655 494h1v1h-1zM655 497h1v1h-1zM655 500h1v1h-1zM655 503h1v1h-1zM655 506h1v1h-1zM655 509h1v1h-1zM655 512h1v1h-1zM655 515h1v1h-1zM655 518h1v1h-1zM655 521h1v1h-1zM655 524h1v1h-1zM655 527h1v1h-1zM655 530h1v1h-1zM655 533h1v1h-1zM655 536h1v1h-1zM655 539h1v1h-1zM655 542h1v1h-1zM655 545h1v1h-1zM655 548h1v1h-1zM655 551h1v1h-1zM655 554h1v1h-1zM655 557h1v1h-1zM655 560h1v1h-1zM655 563h1v1h-1zM655 566h1v1h-1zM655 569h1v1h-1zM655 572h1v1h-1zM655 575h1v1h-1zM12 129h1v1h-1zM15 129h1v1h-1zM18 129h1v1h-1zM21 129h1v1h-1zM24 129h1v1h-1zM27 129h1v1h-1zM30 129h1v1h-1zM33 129h1v1h-1zM36 129h1v1h-1zM39 129h1v1h-1zM42 129h1v1h-1zM45 129h1v1h-1zM48 129h1v1h-1zM51 129h1v1h-1zM54 129h1v1h-1zM57 129h1v1h-1zM60 129h1v1h-1zM63 129h1v1h-1zM66 129h1v1h-1zM69 129h1v1h-1zM72 129h1v1h-1zM75 129h1v1h-1zM78 129h1v1h-1zM81 129h1v1h-1zM84 129h1v1h-1zM87 129h1v1h-1zM90 129h1v1h-1zM93 129h1v1h-1zM96 129h1v1h-1zM99 129h1v1h-1zM102 129h1v1h-1zM105 129h1v1h-1zM108 129h1v1h-1zM111 129h1v1h-1zM114 129h1v1h-1zM117 129h1v1h-1zM120 129h1v1h-1zM123 129h1v1h-1zM126 129h1v1h-1zM129 129h1v1h-1zM132 129h1v1h-1zM135 129h1v1h-1zM138 129h1v1h-1zM141 129h1v1h-1zM144 129h1v1h-1zM147 129h1v1h-1zM150 129h1v1h-1zM153 129h1v1h-1zM156 129h1v1h-1zM159 129h1v1h-1zM162 129h1v1h-1zM165 129h1v1h-1zM168 129h1v1h-1zM171 129h1v1h-1zM174 129h1v1h-1zM177 129h1v1h-1zM180 129h1v1h-1zM183 129h1v1h-1zM186 129h1v1h-1zM189 129h1v1h-1zM192 129h1v1h-1zM195 129h1v1h-1zM198 129h1v1h-1zM201 129h1v1h-1zM204 129h1v1h-1zM207 129h1v1h-1zM210 129h1v1h-1zM213 129h1v1h-1zM216 129h1v1h-1zM219 129h1v1h-1zM222 129h1v1h-1zM225 129h1v1h-1zM228 129h1v1h-1zM231 129h1v1h-1zM234 129h1v1h-1zM237 129h1v1h-1zM240 129h1v1h-1zM243 129h1v1h-1zM246 129h1v1h-1zM249 129h1v1h-1zM252 129h1v1h-1zM255 129h1v1h-1zM258 129h1v1h-1zM261 129h1v1h-1zM264 129h1v1h-1zM267 129h1v1h-1zM270 129h1v1h-1zM273 129h1v1h-1zM276 129h1v1h-1zM279 129h1v1h-1zM282 129h1v1h-1zM285 129h1v1h-1zM288 129h1v1h-1zM291 129h1v1h-1zM294 129h1v1h-1zM297 129h1v1h-1zM300 129h1v1h-1zM303 129h1v1h-1zM306 129h1v1h-1zM309 129h1v1h-1zM312 129h1v1h-1zM315 129h1v1h-1zM318 129h1v1h-1zM321 129h1v1h-1zM324 129h1v1h-1zM327 129h1v1h-1zM330 129h1v1h-1zM333 129h1v1h-1zM336 129h1v1h-1zM339 129h1v1h-1zM342 129h1v1h-1zM345 129h1v1h-1zM348 129h1v1h-1zM351 129h1v1h-1zM354 129h1v1h-1zM357 129h1v1h-1zM360 129h1v1h-1zM363 129h1v1h-1zM366 129h1v1h-1zM369 129h1v1h-1zM372 129h1v1h-1zM375 129h1v1h-1zM378 129h1v1h-1zM381 129h1v1h-1zM384 129h1v1h-1zM387 129h1v1h-1zM390 129h1v1h-1zM393 129h1v1h-1zM396 129h1v1h-1zM399 129h1v1h-1zM402 129h1v1h-1zM405 129h1v1h-1zM408 129h1v1h-1zM411 129h1v1h-1zM414 129h1v1h-1zM417 129h1v1h-1zM420 129h1v1h-1zM423 129h1v1h-1zM426 129h1v1h-1zM429 129h1v1h-1zM432 129h1v1h-1zM435 129h1v1h-1zM438 129h1v1h-1zM441 129h1v1h-1zM444 129h1v1h-1zM447 129h1v1h-1zM450 129h1v1h-1zM453 129h1v1h-1zM456 129h1v1h-1zM459 129h1v1h-1zM462 129h1v1h-1zM465 129h1v1h-1zM468 129h1v1h-1zM471 129h1v1h-1zM474 129h1v1h-1zM477 129h1v1h-1zM480 129h1v1h-1zM483 129h1v1h-1zM486 129h1v1h-1zM489 129h1v1h-1zM492 129h1v1h-1zM495 129h1v1h-1zM498 129h1v1h-1zM501 129h1v1h-1zM504 129h1v1h-1zM507 129h1v1h-1zM510 129h1v1h-1zM513 129h1v1h-1zM516 129h1v1h-1zM519 129h1v1h-1zM522 129h1v1h-1zM525 129h1v1h-1zM528 129h1v1h-1zM531 129h1v1h-1zM534 129h1v1h-1zM537 129h1v1h-1zM540 129h1v1h-1zM543 129h1v1h-1zM546 129h1v1h-1zM549 129h1v1h-1zM552 129h1v1h-1zM555 129h1v1h-1zM558 129h1v1h-1zM561 129h1v1h-1zM564 129h1v1h-1zM567 129h1v1h-1zM570 129h1v1h-1zM573 129h1v1h-1zM576 129h1v1h-1zM579 129h1v1h-1zM582 129h1v1h-1zM585 129h1v1h-1zM588 129h1v1h-1zM591 129h1v1h-1zM594 129h1v1h-1zM597 129h1v1h-1zM600 129h1v1h-1zM603 129h1v1h-1zM606 129h1v1h-1zM609 129h1v1h-1zM612 129h1v1h-1zM615 129h1v1h-1zM618 129h1v1h-1zM621 129h1v1h-1zM624 129h1v1h-1zM627 129h1v1h-1zM630 129h1v1h-1zM633 129h1v1h-1zM636 129h1v1h-1zM639 129h1v1h-1zM642 129h1v1h-1zM645 129h1v1h-1zM648 129h1v1h-1zM651 129h1v1h-1zM654 129h1v1h-1zM657 129h1v1h-1zM660 129h1v1h-1zM663 129h1v1h-1zM666 129h1v1h-1zM669 129h1v1h-1zM672 129h1v1h-1zM675 129h1v1h-1zM678 129h1v1h-1zM681 129h1v1h-1zM684 129h1v1h-1zM687 129h1v1h-1zM690 129h1v1h-1zM693 129h1v1h-1zM696 129h1v1h-1zM699 129h1v1h-1zM702 129h1v1h-1zM705 129h1v1h-1zM708 129h1v1h-1zM711 129h1v1h-1zM714 129h1v1h-1zM717 129h1v1h-1zM720 129h1v1h-1zM723 129h1v1h-1zM726 129h1v1h-1zM12 199h1v1h-1zM15 199h1v1h-1zM18 199h1v1h-1zM21 199h1v1h-1zM24 199h1v1h-1zM27 199h1v1h-1zM30 199h1v1h-1zM33 199h1v1h-1zM36 199h1v1h-1zM39 199h1v1h-1zM42 199h1v1h-1zM45 199h1v1h-1zM48 199h1v1h-1zM51 199h1v1h-1zM54 199h1v1h-1zM57 199h1v1h-1zM60 199h1v1h-1zM63 199h1v1h-1zM66 199h1v1h-1zM69 199h1v1h-1zM72 199h1v1h-1zM75 199h1v1h-1zM78 199h1v1h-1zM81 199h1v1h-1zM84 199h1v1h-1zM87 199h1v1h-1zM90 199h1v1h-1zM93 199h1v1h-1zM96 199h1v1h-1zM99 199h1v1h-1zM102 199h1v1h-1zM105 199h1v1h-1zM108 199h1v1h-1zM111 199h1v1h-1zM114 199h1v1h-1zM117 199h1v1h-1zM120 199h1v1h-1zM123 199h1v1h-1zM126 199h1v1h-1zM129 199h1v1h-1zM132 199h1v1h-1zM135 199h1v1h-1zM138 199h1v1h-1zM141 199h1v1h-1zM144 199h1v1h-1zM147 199h1v1h-1zM150 199h1v1h-1zM153 199h1v1h-1zM156 199h1v1h-1zM159 199h1v1h-1zM162 199h1v1h-1zM165 199h1v1h-1zM168 199h1v1h-1zM171 199h1v1h-1zM174 199h1v1h-1zM177 199h1v1h-1zM180 199h1v1h-1zM183 199h1v1h-1zM186 199h1v1h-1zM189 199h1v1h-1zM192 199h1v1h-1zM195 199h1v1h-1zM198 199h1v1h-1zM201 199h1v1h-1zM204 199h1v1h-1zM207 199h1v1h-1zM210 199h1v1h-1zM213 199h1v1h-1zM216 199h1v1h-1zM219 199h1v1h-1zM222 199h1v1h-1zM225 199h1v1h-1zM228 199h1v1h-1zM231 199h1v1h-1zM234 199h1v1h-1zM237 199h1v1h-1zM240 199h1v1h-1zM243 199h1v1h-1zM246 199h1v1h-1zM249 199h1v1h-1zM252 199h1v1h-1zM255 199h1v1h-1zM258 199h1v1h-1zM261 199h1v1h-1zM264 199h1v1h-1zM267 199h1v1h-1zM270 199h1v1h-1zM273 199h1v1h-1zM276 199h1v1h-1zM279 199h1v1h-1zM282 199h1v1h-1zM285 199h1v1h-1zM288 199h1v1h-1zM291 199h1v1h-1zM294 199h1v1h-1zM297 199h1v1h-1zM300 199h1v1h-1zM303 199h1v1h-1zM306 199h1v1h-1zM309 199h1v1h-1zM312 199h1v1h-1zM315 199h1v1h-1zM318 199h1v1h-1zM321 199h1v1h-1zM324 199h1v1h-1zM327 199h1v1h-1zM330 199h1v1h-1zM333 199h1v1h-1zM336 199h1v1h-1zM339 199h1v1h-1zM342 199h1v1h-1zM345 199h1v1h-1zM348 199h1v1h-1zM351 199h1v1h-1zM354 199h1v1h-1zM357 199h1v1h-1zM360 199h1v1h-1zM363 199h1v1h-1zM366 199h1v1h-1zM369 199h1v1h-1zM372 199h1v1h-1zM375 199h1v1h-1zM378 199h1v1h-1zM381 199h1v1h-1zM384 199h1v1h-1zM387 199h1v1h-1zM390 199h1v1h-1zM393 199h1v1h-1zM396 199h1v1h-1zM399 199h1v1h-1zM402 199h1v1h-1zM405 199h1v1h-1zM408 199h1v1h-1zM411 199h1v1h-1zM414 199h1v1h-1zM417 199h1v1h-1zM420 199h1v1h-1zM423 199h1v1h-1zM426 199h1v1h-1zM429 199h1v1h-1zM432 199h1v1h-1zM435 199h1v1h-1zM438 199h1v1h-1zM441 199h1v1h-1zM444 199h1v1h-1zM447 199h1v1h-1zM450 199h1v1h-1zM453 199h1v1h-1zM456 199h1v1h-1zM459 199h1v1h-1zM462 199h1v1h-1zM465 199h1v1h-1zM468 199h1v1h-1zM471 199h1v1h-1zM474 199h1v1h-1zM477 199h1v1h-1zM480 199h1v1h-1zM483 199h1v1h-1zM486 199h1v1h-1zM489 199h1v1h-1zM492 199h1v1h-1zM495 199h1v1h-1zM498 199h1v1h-1zM501 199h1v1h-1zM504 199h1v1h-1zM507 199h1v1h-1zM510 199h1v1h-1zM513 199h1v1h-1zM516 199h1v1h-1zM519 199h1v1h-1zM522 199h1v1h-1zM525 199h1v1h-1zM528 199h1v1h-1zM531 199h1v1h-1zM534 199h1v1h-1zM537 199h1v1h-1zM540 199h1v1h-1zM543 199h1v1h-1zM546 199h1v1h-1zM549 199h1v1h-1zM552 199h1v1h-1zM555 199h1v1h-1zM558 199h1v1h-1zM561 199h1v1h-1zM564 199h1v1h-1zM567 199h1v1h-1zM570 199h1v1h-1zM573 199h1v1h-1zM576 199h1v1h-1zM579 199h1v1h-1zM582 199h1v1h-1zM585 199h1v1h-1zM588 199h1v1h-1zM591 199h1v1h-1zM594 199h1v1h-1zM597 199h1v1h-1zM600 199h1v1h-1zM603 199h1v1h-1zM606 199h1v1h-1zM609 199h1v1h-1zM612 199h1v1h-1zM615 199h1v1h-1zM618 199h1v1h-1zM621 199h1v1h-1zM624 199h1v1h-1zM627 199h1v1h-1zM630 199h1v1h-1zM633 199h1v1h-1zM636 199h1v1h-1zM639 199h1v1h-1zM642 199h1v1h-1zM645 199h1v1h-1zM648 199h1v1h-1zM651 199h1v1h-1zM654 199h1v1h-1zM657 199h1v1h-1zM660 199h1v1h-1zM663 199h1v1h-1zM666 199h1v1h-1zM669 199h1v1h-1zM672 199h1v1h-1zM675 199h1v1h-1zM678 199h1v1h-1zM681 199h1v1h-1zM684 199h1v1h-1zM687 199h1v1h-1zM690 199h1v1h-1zM693 199h1v1h-1zM696 199h1v1h-1zM699 199h1v1h-1zM702 199h1v1h-1zM705 199h1v1h-1zM708 199h1v1h-1zM711 199h1v1h-1zM714 199h1v1h-1zM717 199h1v1h-1zM720 199h1v1h-1zM723 199h1v1h-1zM726 199h1v1h-1zM12 269h1v1h-1zM15 269h1v1h-1zM18 269h1v1h-1zM21 269h1v1h-1zM24 269h1v1h-1zM27 269h1v1h-1zM30 269h1v1h-1zM33 269h1v1h-1zM36 269h1v1h-1zM39 269h1v1h-1zM42 269h1v1h-1zM45 269h1v1h-1zM48 269h1v1h-1zM51 269h1v1h-1zM54 269h1v1h-1zM57 269h1v1h-1zM60 269h1v1h-1zM63 269h1v1h-1zM66 269h1v1h-1zM69 269h1v1h-1zM72 269h1v1h-1zM75 269h1v1h-1zM78 269h1v1h-1zM81 269h1v1h-1zM84 269h1v1h-1zM87 269h1v1h-1zM90 269h1v1h-1zM93 269h1v1h-1zM96 269h1v1h-1zM99 269h1v1h-1zM102 269h1v1h-1zM105 269h1v1h-1zM108 269h1v1h-1zM111 269h1v1h-1zM114 269h1v1h-1zM117 269h1v1h-1zM120 269h1v1h-1zM123 269h1v1h-1zM126 269h1v1h-1zM129 269h1v1h-1zM132 269h1v1h-1zM135 269h1v1h-1zM138 269h1v1h-1zM141 269h1v1h-1zM144 269h1v1h-1zM147 269h1v1h-1zM150 269h1v1h-1zM153 269h1v1h-1zM156 269h1v1h-1zM159 269h1v1h-1zM162 269h1v1h-1zM165 269h1v1h-1zM168 269h1v1h-1zM171 269h1v1h-1zM174 269h1v1h-1zM177 269h1v1h-1zM180 269h1v1h-1zM183 269h1v1h-1zM186 269h1v1h-1zM189 269h1v1h-1zM192 269h1v1h-1zM195 269h1v1h-1zM198 269h1v1h-1zM201 269h1v1h-1zM204 269h1v1h-1zM207 269h1v1h-1zM210 269h1v1h-1zM213 269h1v1h-1zM216 269h1v1h-1zM219 269h1v1h-1zM222 269h1v1h-1zM225 269h1v1h-1zM228 269h1v1h-1zM231 269h1v1h-1zM234 269h1v1h-1zM237 269h1v1h-1zM240 269h1v1h-1zM243 269h1v1h-1zM246 269h1v1h-1zM249 269h1v1h-1zM252 269h1v1h-1zM255 269h1v1h-1zM258 269h1v1h-1zM261 269h1v1h-1zM264 269h1v1h-1zM267 269h1v1h-1zM270 269h1v1h-1zM273 269h1v1h-1zM276 269h1v1h-1zM279 269h1v1h-1zM282 269h1v1h-1zM285 269h1v1h-1zM288 269h1v1h-1zM291 269h1v1h-1zM294 269h1v1h-1zM297 269h1v1h-1zM300 269h1v1h-1zM303 269h1v1h-1zM306 269h1v1h-1zM309 269h1v1h-1zM312 269h1v1h-1zM315 269h1v1h-1zM318 269h1v1h-1zM321 269h1v1h-1zM324 269h1v1h-1zM327 269h1v1h-1zM330 269h1v1h-1zM333 269h1v1h-1zM336 269h1v1h-1zM339 269h1v1h-1zM342 269h1v1h-1zM345 269h1v1h-1zM348 269h1v1h-1zM351 269h1v1h-1zM354 269h1v1h-1zM357 269h1v1h-1zM360 269h1v1h-1zM363 269h1v1h-1zM366 269h1v1h-1zM369 269h1v1h-1zM372 269h1v1h-1zM375 269h1v1h-1zM378 269h1v1h-1zM381 269h1v1h-1zM384 269h1v1h-1zM387 269h1v1h-1zM390 269h1v1h-1zM393 269h1v1h-1zM396 269h1v1h-1zM399 269h1v1h-1zM402 269h1v1h-1zM405 269h1v1h-1zM408 269h1v1h-1zM411 269h1v1h-1zM414 269h1v1h-1zM417 269h1v1h-1zM420 269h1v1h-1zM423 269h1v1h-1zM426 269h1v1h-1zM429 269h1v1h-1zM432 269h1v1h-1zM435 269h1v1h-1zM438 269h1v1h-1zM441 269h1v1h-1zM444 269h1v1h-1zM447 269h1v1h-1zM450 269h1v1h-1zM453 269h1v1h-1zM456 269h1v1h-1zM459 269h1v1h-1zM462 269h1v1h-1zM465 269h1v1h-1zM468 269h1v1h-1zM471 269h1v1h-1zM474 269h1v1h-1zM477 269h1v1h-1zM480 269h1v1h-1zM483 269h1v1h-1zM486 269h1v1h-1zM489 269h1v1h-1zM492 269h1v1h-1zM495 269h1v1h-1zM498 269h1v1h-1zM501 269h1v1h-1zM504 269h1v1h-1zM507 269h1v1h-1zM510 269h1v1h-1zM513 269h1v1h-1zM516 269h1v1h-1zM519 269h1v1h-1zM522 269h1v1h-1zM525 269h1v1h-1zM528 269h1v1h-1zM531 269h1v1h-1zM534 269h1v1h-1zM537 269h1v1h-1zM540 269h1v1h-1zM543 269h1v1h-1zM546 269h1v1h-1zM549 269h1v1h-1zM552 269h1v1h-1zM555 269h1v1h-1zM558 269h1v1h-1zM561 269h1v1h-1zM564 269h1v1h-1zM567 269h1v1h-1zM570 269h1v1h-1zM573 269h1v1h-1zM576 269h1v1h-1zM579 269h1v1h-1zM582 269h1v1h-1zM585 269h1v1h-1zM588 269h1v1h-1zM591 269h1v1h-1zM594 269h1v1h-1zM597 269h1v1h-1zM600 269h1v1h-1zM603 269h1v1h-1zM606 269h1v1h-1zM609 269h1v1h-1zM612 269h1v1h-1zM615 269h1v1h-1zM618 269h1v1h-1zM621 269h1v1h-1zM624 269h1v1h-1zM627 269h1v1h-1zM630 269h1v1h-1zM633 269h1v1h-1zM636 269h1v1h-1zM639 269h1v1h-1zM642 269h1v1h-1zM645 269h1v1h-1zM648 269h1v1h-1zM651 269h1v1h-1zM654 269h1v1h-1zM657 269h1v1h-1zM660 269h1v1h-1zM663 269h1v1h-1zM666 269h1v1h-1zM669 269h1v1h-1zM672 269h1v1h-1zM675 269h1v1h-1zM678 269h1v1h-1zM681 269h1v1h-1zM684 269h1v1h-1zM687 269h1v1h-1zM690 269h1v1h-1zM693 269h1v1h-1zM696 269h1v1h-1zM699 269h1v1h-1zM702 269h1v1h-1zM705 269h1v1h-1zM708 269h1v1h-1zM711 269h1v1h-1zM714 269h1v1h-1zM717 269h1v1h-1zM720 269h1v1h-1zM723 269h1v1h-1zM726 269h1v1h-1zM12 339h1v1h-1zM15 339h1v1h-1zM18 339h1v1h-1zM21 339h1v1h-1zM24 339h1v1h-1zM27 339h1v1h-1zM30 339h1v1h-1zM33 339h1v1h-1zM36 339h1v1h-1zM39 339h1v1h-1zM42 339h1v1h-1zM45 339h1v1h-1zM48 339h1v1h-1zM51 339h1v1h-1zM54 339h1v1h-1zM57 339h1v1h-1zM60 339h1v1h-1zM63 339h1v1h-1zM66 339h1v1h-1zM69 339h1v1h-1zM72 339h1v1h-1zM75 339h1v1h-1zM78 339h1v1h-1zM81 339h1v1h-1zM84 339h1v1h-1zM87 339h1v1h-1zM90 339h1v1h-1zM93 339h1v1h-1zM96 339h1v1h-1zM99 339h1v1h-1zM102 339h1v1h-1zM105 339h1v1h-1zM108 339h1v1h-1zM111 339h1v1h-1zM114 339h1v1h-1zM117 339h1v1h-1zM120 339h1v1h-1zM123 339h1v1h-1zM126 339h1v1h-1zM129 339h1v1h-1zM132 339h1v1h-1zM135 339h1v1h-1zM138 339h1v1h-1zM141 339h1v1h-1zM144 339h1v1h-1zM147 339h1v1h-1zM150 339h1v1h-1zM153 339h1v1h-1zM156 339h1v1h-1zM159 339h1v1h-1zM162 339h1v1h-1zM165 339h1v1h-1zM168 339h1v1h-1zM171 339h1v1h-1zM174 339h1v1h-1zM177 339h1v1h-1zM180 339h1v1h-1zM183 339h1v1h-1zM186 339h1v1h-1zM189 339h1v1h-1zM192 339h1v1h-1zM195 339h1v1h-1zM198 339h1v1h-1zM201 339h1v1h-1zM204 339h1v1h-1zM207 339h1v1h-1zM210 339h1v1h-1zM213 339h1v1h-1zM216 339h1v1h-1zM219 339h1v1h-1zM222 339h1v1h-1zM225 339h1v1h-1zM228 339h1v1h-1zM231 339h1v1h-1zM234 339h1v1h-1zM237 339h1v1h-1zM240 339h1v1h-1zM243 339h1v1h-1zM246 339h1v1h-1zM249 339h1v1h-1zM252 339h1v1h-1zM255 339h1v1h-1zM258 339h1v1h-1zM261 339h1v1h-1zM264 339h1v1h-1zM267 339h1v1h-1zM270 339h1v1h-1zM273 339h1v1h-1zM276 339h1v1h-1zM279 339h1v1h-1zM282 339h1v1h-1zM285 339h1v1h-1zM288 339h1v1h-1zM291 339h1v1h-1zM294 339h1v1h-1zM297 339h1v1h-1zM300 339h1v1h-1zM303 339h1v1h-1zM306 339h1v1h-1zM309 339h1v1h-1zM312 339h1v1h-1zM315 339h1v1h-1zM318 339h1v1h-1zM321 339h1v1h-1zM324 339h1v1h-1zM327 339h1v1h-1zM330 339h1v1h-1zM333 339h1v1h-1zM336 339h1v1h-1zM339 339h1v1h-1zM342 339h1v1h-1zM345 339h1v1h-1zM348 339h1v1h-1zM351 339h1v1h-1zM354 339h1v1h-1zM357 339h1v1h-1zM360 339h1v1h-1zM363 339h1v1h-1zM366 339h1v1h-1zM369 339h1v1h-1zM372 339h1v1h-1zM375 339h1v1h-1zM378 339h1v1h-1zM381 339h1v1h-1zM384 339h1v1h-1zM387 339h1v1h-1zM390 339h1v1h-1zM393 339h1v1h-1zM396 339h1v1h-1zM399 339h1v1h-1zM402 339h1v1h-1zM405 339h1v1h-1zM408 339h1v1h-1zM411 339h1v1h-1zM414 339h1v1h-1zM417 339h1v1h-1zM420 339h1v1h-1zM423 339h1v1h-1zM426 339h1v1h-1zM429 339h1v1h-1zM432 339h1v1h-1zM435 339h1v1h-1zM438 339h1v1h-1zM441 339h1v1h-1zM444 339h1v1h-1zM447 339h1v1h-1zM450 339h1v1h-1zM453 339h1v1h-1zM456 339h1v1h-1zM459 339h1v1h-1zM462 339h1v1h-1zM465 339h1v1h-1zM468 339h1v1h-1zM471 339h1v1h-1zM474 339h1v1h-1zM477 339h1v1h-1zM480 339h1v1h-1zM483 339h1v1h-1zM486 339h1v1h-1zM489 339h1v1h-1zM492 339h1v1h-1zM495 339h1v1h-1zM498 339h1v1h-1zM501 339h1v1h-1zM504 339h1v1h-1zM507 339h1v1h-1zM510 339h1v1h-1zM513 339h1v1h-1zM516 339h1v1h-1zM519 339h1v1h-1zM522 339h1v1h-1zM525 339h1v1h-1zM528 339h1v1h-1zM531 339h1v1h-1zM534 339h1v1h-1zM537 339h1v1h-1zM540 339h1v1h-1zM543 339h1v1h-1zM546 339h1v1h-1zM549 339h1v1h-1zM552 339h1v1h-1zM555 339h1v1h-1zM558 339h1v1h-1zM561 339h1v1h-1zM564 339h1v1h-1zM567 339h1v1h-1zM570 339h1v1h-1zM573 339h1v1h-1zM576 339h1v1h-1zM579 339h1v1h-1zM582 339h1v1h-1zM585 339h1v1h-1zM588 339h1v1h-1zM591 339h1v1h-1zM594 339h1v1h-1zM597 339h1v1h-1zM600 339h1v1h-1zM603 339h1v1h-1zM606 339h1v1h-1zM609 339h1v1h-1zM612 339h1v1h-1zM615 339h1v1h-1zM618 339h1v1h-1zM621 339h1v1h-1zM624 339h1v1h-1zM627 339h1v1h-1zM630 339h1v1h-1zM633 339h1v1h-1zM636 339h1v1h-1zM639 339h1v1h-1zM642 339h1v1h-1zM645 339h1v1h-1zM648 339h1v1h-1zM651 339h1v1h-1zM654 339h1v1h-1zM657 339h1v1h-1zM660 339h1v1h-1zM663 339h1v1h-1zM666 339h1v1h-1zM669 339h1v1h-1zM672 339h1v1h-1zM675 339h1v1h-1zM678 339h1v1h-1zM681 339h1v1h-1zM684 339h1v1h-1zM687 339h1v1h-1zM690 339h1v1h-1zM693 339h1v1h-1zM696 339h1v1h-1zM699 339h1v1h-1zM702 339h1v1h-1zM705 339h1v1h-1zM708 339h1v1h-1zM711 339h1v1h-1zM714 339h1v1h-1zM717 339h1v1h-1zM720 339h1v1h-1zM723 339h1v1h-1zM726 339h1v1h-1zM12 408h1v1h-1zM15 408h1v1h-1zM18 408h1v1h-1zM21 408h1v1h-1zM24 408h1v1h-1zM27 408h1v1h-1zM30 408h1v1h-1zM33 408h1v1h-1zM36 408h1v1h-1zM39 408h1v1h-1zM42 408h1v1h-1zM45 408h1v1h-1zM48 408h1v1h-1zM51 408h1v1h-1zM54 408h1v1h-1zM57 408h1v1h-1zM60 408h1v1h-1zM63 408h1v1h-1zM66 408h1v1h-1zM69 408h1v1h-1zM72 408h1v1h-1zM75 408h1v1h-1zM78 408h1v1h-1zM81 408h1v1h-1zM84 408h1v1h-1zM87 408h1v1h-1zM90 408h1v1h-1zM93 408h1v1h-1zM96 408h1v1h-1zM99 408h1v1h-1zM102 408h1v1h-1zM105 408h1v1h-1zM108 408h1v1h-1zM111 408h1v1h-1zM114 408h1v1h-1zM117 408h1v1h-1zM120 408h1v1h-1zM123 408h1v1h-1zM126 408h1v1h-1zM129 408h1v1h-1zM132 408h1v1h-1zM135 408h1v1h-1zM138 408h1v1h-1zM141 408h1v1h-1zM144 408h1v1h-1zM147 408h1v1h-1zM150 408h1v1h-1zM153 408h1v1h-1zM156 408h1v1h-1zM159 408h1v1h-1zM162 408h1v1h-1zM165 408h1v1h-1zM168 408h1v1h-1zM171 408h1v1h-1zM174 408h1v1h-1zM177 408h1v1h-1zM180 408h1v1h-1zM183 408h1v1h-1zM186 408h1v1h-1zM189 408h1v1h-1zM192 408h1v1h-1zM195 408h1v1h-1zM198 408h1v1h-1zM201 408h1v1h-1zM204 408h1v1h-1zM207 408h1v1h-1zM210 408h1v1h-1zM213 408h1v1h-1zM216 408h1v1h-1zM219 408h1v1h-1zM222 408h1v1h-1zM225 408h1v1h-1zM228 408h1v1h-1zM231 408h1v1h-1zM234 408h1v1h-1zM237 408h1v1h-1zM240 408h1v1h-1zM243 408h1v1h-1zM246 408h1v1h-1zM249 408h1v1h-1zM252 408h1v1h-1zM255 408h1v1h-1zM258 408h1v1h-1zM261 408h1v1h-1zM264 408h1v1h-1zM267 408h1v1h-1zM270 408h1v1h-1zM273 408h1v1h-1zM276 408h1v1h-1zM279 408h1v1h-1zM282 408h1v1h-1zM285 408h1v1h-1zM288 408h1v1h-1zM291 408h1v1h-1zM294 408h1v1h-1zM297 408h1v1h-1zM300 408h1v1h-1zM303 408h1v1h-1zM306 408h1v1h-1zM309 408h1v1h-1zM312 408h1v1h-1zM315 408h1v1h-1zM318 408h1v1h-1zM321 408h1v1h-1zM324 408h1v1h-1zM327 408h1v1h-1zM330 408h1v1h-1zM333 408h1v1h-1zM336 408h1v1h-1zM339 408h1v1h-1zM342 408h1v1h-1zM345 408h1v1h-1zM348 408h1v1h-1zM351 408h1v1h-1zM354 408h1v1h-1zM357 408h1v1h-1zM360 408h1v1h-1zM363 408h1v1h-1zM366 408h1v1h-1zM369 408h1v1h-1zM372 408h1v1h-1zM375 408h1v1h-1zM378 408h1v1h-1zM381 408h1v1h-1zM384 408h1v1h-1zM387 408h1v1h-1zM390 408h1v1h-1zM393 408h1v1h-1zM396 408h1v1h-1zM399 408h1v1h-1zM402 408h1v1h-1zM405 408h1v1h-1zM408 408h1v1h-1zM411 408h1v1h-1zM414 408h1v1h-1zM417 408h1v1h-1zM420 408h1v1h-1zM423 408h1v1h-1zM426 408h1v1h-1zM429 408h1v1h-1zM432 408h1v1h-1zM435 408h1v1h-1zM438 408h1v1h-1zM441 408h1v1h-1zM444 408h1v1h-1zM447 408h1v1h-1zM450 408h1v1h-1zM453 408h1v1h-1zM456 408h1v1h-1zM459 408h1v1h-1zM462 408h1v1h-1zM465 408h1v1h-1zM468 408h1v1h-1zM471 408h1v1h-1zM474 408h1v1h-1zM477 408h1v1h-1zM480 408h1v1h-1zM483 408h1v1h-1zM486 408h1v1h-1zM489 408h1v1h-1zM492 408h1v1h-1zM495 408h1v1h-1zM498 408h1v1h-1zM501 408h1v1h-1zM504 408h1v1h-1zM507 408h1v1h-1zM510 408h1v1h-1zM513 408h1v1h-1zM516 408h1v1h-1zM519 408h1v1h-1zM522 408h1v1h-1zM525 408h1v1h-1zM528 408h1v1h-1zM531 408h1v1h-1zM534 408h1v1h-1zM537 408h1v1h-1zM540 408h1v1h-1zM543 408h1v1h-1zM546 408h1v1h-1zM549 408h1v1h-1zM552 408h1v1h-1zM555 408h1v1h-1zM558 408h1v1h-1zM561 408h1v1h-1zM564 408h1v1h-1zM567 408h1v1h-1zM570 408h1v1h-1zM573 408h1v1h-1zM576 408h1v1h-1zM579 408h1v1h-1zM582 408h1v1h-1zM585 408h1v1h-1zM588 408h1v1h-1zM591 408h1v1h-1zM594 408h1v1h-1zM597 408h1v1h-1zM600 408h1v1h-1zM603 408h1v1h-1zM606 408h1v1h-1zM609 408h1v1h-1zM612 408h1v1h-1zM615 408h1v1h-1zM618 408h1v1h-1zM621 408h1v1h-1zM624 408h1v1h-1zM627 408h1v1h-1zM630 408h1v1h-1zM633 408h1v1h-1zM636 408h1v1h-1zM639 408h1v1h-1zM642 408h1v1h-1zM645 408h1v1h-1zM648 408h1v1h-1zM651 408h1v1h-1zM654 408h1v1h-1zM657 408h1v1h-1zM660 408h1v1h-1zM663 408h1v1h-1zM666 408h1v1h-1zM669 408h1v1h-1zM672 408h1v1h-1zM675 408h1v1h-1zM678 408h1v1h-1zM681 408h1v1h-1zM684 408h1v1h-1zM687 408h1v1h-1zM690 408h1v1h-1zM693 408h1v1h-1zM696 408h1v1h-1zM699 408h1v1h-1zM702 408h1v1h-1zM705 408h1v1h-1zM708 408h1v1h-1zM711 408h1v1h-1zM714 408h1v1h-1zM717 408h1v1h-1zM720 408h1v1h-1zM723 408h1v1h-1zM726 408h1v1h-1zM12 478h1v1h-1zM15 478h1v1h-1zM18 478h1v1h-1zM21 478h1v1h-1zM24 478h1v1h-1zM27 478h1v1h-1zM30 478h1v1h-1zM33 478h1v1h-1zM36 478h1v1h-1zM39 478h1v1h-1zM42 478h1v1h-1zM45 478h1v1h-1zM48 478h1v1h-1zM51 478h1v1h-1zM54 478h1v1h-1zM57 478h1v1h-1zM60 478h1v1h-1zM63 478h1v1h-1zM66 478h1v1h-1zM69 478h1v1h-1zM72 478h1v1h-1zM75 478h1v1h-1zM78 478h1v1h-1zM81 478h1v1h-1zM84 478h1v1h-1zM87 478h1v1h-1zM90 478h1v1h-1zM93 478h1v1h-1zM96 478h1v1h-1zM99 478h1v1h-1zM102 478h1v1h-1zM105 478h1v1h-1zM108 478h1v1h-1zM111 478h1v1h-1zM114 478h1v1h-1zM117 478h1v1h-1zM120 478h1v1h-1zM123 478h1v1h-1zM126 478h1v1h-1zM129 478h1v1h-1zM132 478h1v1h-1zM135 478h1v1h-1zM138 478h1v1h-1zM141 478h1v1h-1zM144 478h1v1h-1zM147 478h1v1h-1zM150 478h1v1h-1zM153 478h1v1h-1zM156 478h1v1h-1zM159 478h1v1h-1zM162 478h1v1h-1zM165 478h1v1h-1zM168 478h1v1h-1zM171 478h1v1h-1zM174 478h1v1h-1zM177 478h1v1h-1zM180 478h1v1h-1zM183 478h1v1h-1zM186 478h1v1h-1zM189 478h1v1h-1zM192 478h1v1h-1zM195 478h1v1h-1zM198 478h1v1h-1zM201 478h1v1h-1zM204 478h1v1h-1zM207 478h1v1h-1zM210 478h1v1h-1zM213 478h1v1h-1zM216 478h1v1h-1zM219 478h1v1h-1zM222 478h1v1h-1zM225 478h1v1h-1zM228 478h1v1h-1zM231 478h1v1h-1zM234 478h1v1h-1zM237 478h1v1h-1zM240 478h1v1h-1zM243 478h1v1h-1zM246 478h1v1h-1zM249 478h1v1h-1zM252 478h1v1h-1zM255 478h1v1h-1zM258 478h1v1h-1zM261 478h1v1h-1zM264 478h1v1h-1zM267 478h1v1h-1zM270 478h1v1h-1zM273 478h1v1h-1zM276 478h1v1h-1zM279 478h1v1h-1zM282 478h1v1h-1zM285 478h1v1h-1zM288 478h1v1h-1zM291 478h1v1h-1zM294 478h1v1h-1zM297 478h1v1h-1zM300 478h1v1h-1zM303 478h1v1h-1zM306 478h1v1h-1zM309 478h1v1h-1zM312 478h1v1h-1zM315 478h1v1h-1zM318 478h1v1h-1zM321 478h1v1h-1zM324 478h1v1h-1zM327 478h1v1h-1zM330 478h1v1h-1zM333 478h1v1h-1zM336 478h1v1h-1zM339 478h1v1h-1zM342 478h1v1h-1zM345 478h1v1h-1zM348 478h1v1h-1zM351 478h1v1h-1zM354 478h1v1h-1zM357 478h1v1h-1zM360 478h1v1h-1zM363 478h1v1h-1zM366 478h1v1h-1zM369 478h1v1h-1zM372 478h1v1h-1zM375 478h1v1h-1zM378 478h1v1h-1zM381 478h1v1h-1zM384 478h1v1h-1zM387 478h1v1h-1zM390 478h1v1h-1zM393 478h1v1h-1zM396 478h1v1h-1zM399 478h1v1h-1zM402 478h1v1h-1zM405 478h1v1h-1zM408 478h1v1h-1zM411 478h1v1h-1zM414 478h1v1h-1zM417 478h1v1h-1zM420 478h1v1h-1zM423 478h1v1h-1zM426 478h1v1h-1zM429 478h1v1h-1zM432 478h1v1h-1zM435 478h1v1h-1zM438 478h1v1h-1zM441 478h1v1h-1zM444 478h1v1h-1zM447 478h1v1h-1zM450 478h1v1h-1zM453 478h1v1h-1zM456 478h1v1h-1zM459 478h1v1h-1zM462 478h1v1h-1zM465 478h1v1h-1zM468 478h1v1h-1zM471 478h1v1h-1zM474 478h1v1h-1zM477 478h1v1h-1zM480 478h1v1h-1zM483 478h1v1h-1zM486 478h1v1h-1zM489 478h1v1h-1zM492 478h1v1h-1zM495 478h1v1h-1zM498 478h1v1h-1zM501 478h1v1h-1zM504 478h1v1h-1zM507 478h1v1h-1zM510 478h1v1h-1zM513 478h1v1h-1zM516 478h1v1h-1zM519 478h1v1h-1zM522 478h1v1h-1zM525 478h1v1h-1zM528 478h1v1h-1zM531 478h1v1h-1zM534 478h1v1h-1zM537 478h1v1h-1zM540 478h1v1h-1zM543 478h1v1h-1zM546 478h1v1h-1zM549 478h1v1h-1zM552 478h1v1h-1zM555 478h1v1h-1zM558 478h1v1h-1zM561 478h1v1h-1zM564 478h1v1h-1zM567 478h1v1h-1zM570 478h1v1h-1zM573 478h1v1h-1zM576 478h1v1h-1zM579 478h1v1h-1zM582 478h1v1h-1zM585 478h1v1h-1zM588 478h1v1h-1zM591 478h1v1h-1zM594 478h1v1h-1zM597 478h1v1h-1zM600 478h1v1h-1zM603 478h1v1h-1zM606 478h1v1h-1zM609 478h1v1h-1zM612 478h1v1h-1zM615 478h1v1h-1zM618 478h1v1h-1zM621 478h1v1h-1zM624 478h1v1h-1zM627 478h1v1h-1zM630 478h1v1h-1zM633 478h1v1h-1zM636 478h1v1h-1zM639 478h1v1h-1zM642 478h1v1h-1zM645 478h1v1h-1zM648 478h1v1h-1zM651 478h1v1h-1zM654 478h1v1h-1zM657 478h1v1h-1zM660 478h1v1h-1zM663 478h1v1h-1zM666 478h1v1h-1zM669 478h1v1h-1zM672 478h1v1h-1zM675 478h1v1h-1zM678 478h1v1h-1zM681 478h1v1h-1zM684 478h1v1h-1zM687 478h1v1h-1zM690 478h1v1h-1zM693 478h1v1h-1zM696 478h1v1h-1zM699 478h1v1h-1zM702 478h1v1h-1zM705 478h1v1h-1zM708 478h1v1h-1zM711 478h1v1h-1zM714 478h1v1h-1zM717 478h1v1h-1zM720 478h1v1h-1zM723 478h1v1h-1zM726 478h1v1h-1zM12 548h1v1h-1zM15 548h1v1h-1zM18 548h1v1h-1zM21 548h1v1h-1zM24 548h1v1h-1zM27 548h1v1h-1zM30 548h1v1h-1zM33 548h1v1h-1zM36 548h1v1h-1zM39 548h1v1h-1zM42 548h1v1h-1zM45 548h1v1h-1zM48 548h1v1h-1zM51 548h1v1h-1zM54 548h1v1h-1zM57 548h1v1h-1zM60 548h1v1h-1zM63 548h1v1h-1zM66 548h1v1h-1zM69 548h1v1h-1zM72 548h1v1h-1zM75 548h1v1h-1zM78 548h1v1h-1zM81 548h1v1h-1zM84 548h1v1h-1zM87 548h1v1h-1zM90 548h1v1h-1zM93 548h1v1h-1zM96 548h1v1h-1zM99 548h1v1h-1zM102 548h1v1h-1zM105 548h1v1h-1zM108 548h1v1h-1zM111 548h1v1h-1zM114 548h1v1h-1zM117 548h1v1h-1zM120 548h1v1h-1zM123 548h1v1h-1zM126 548h1v1h-1zM129 548h1v1h-1zM132 548h1v1h-1zM135 548h1v1h-1zM138 548h1v1h-1zM141 548h1v1h-1zM144 548h1v1h-1zM147 548h1v1h-1zM150 548h1v1h-1zM153 548h1v1h-1zM156 548h1v1h-1zM159 548h1v1h-1zM162 548h1v1h-1zM165 548h1v1h-1zM168 548h1v1h-1zM171 548h1v1h-1zM174 548h1v1h-1zM177 548h1v1h-1zM180 548h1v1h-1zM183 548h1v1h-1zM186 548h1v1h-1zM189 548h1v1h-1zM192 548h1v1h-1zM195 548h1v1h-1zM198 548h1v1h-1zM201 548h1v1h-1zM204 548h1v1h-1zM207 548h1v1h-1zM210 548h1v1h-1zM213 548h1v1h-1zM216 548h1v1h-1zM219 548h1v1h-1zM222 548h1v1h-1zM225 548h1v1h-1zM228 548h1v1h-1zM231 548h1v1h-1zM234 548h1v1h-1zM237 548h1v1h-1zM240 548h1v1h-1zM243 548h1v1h-1zM246 548h1v1h-1zM249 548h1v1h-1zM252 548h1v1h-1zM255 548h1v1h-1zM258 548h1v1h-1zM261 548h1v1h-1zM264 548h1v1h-1zM267 548h1v1h-1zM270 548h1v1h-1zM273 548h1v1h-1zM276 548h1v1h-1zM279 548h1v1h-1zM282 548h1v1h-1zM285 548h1v1h-1zM288 548h1v1h-1zM291 548h1v1h-1zM294 548h1v1h-1zM297 548h1v1h-1zM300 548h1v1h-1zM303 548h1v1h-1zM306 548h1v1h-1zM309 548h1v1h-1zM312 548h1v1h-1zM315 548h1v1h-1zM318 548h1v1h-1zM321 548h1v1h-1zM324 548h1v1h-1zM327 548h1v1h-1zM330 548h1v1h-1zM333 548h1v1h-1zM336 548h1v1h-1zM339 548h1v1h-1zM342 548h1v1h-1zM345 548h1v1h-1zM348 548h1v1h-1zM351 548h1v1h-1zM354 548h1v1h-1zM357 548h1v1h-1zM360 548h1v1h-1zM363 548h1v1h-1zM366 548h1v1h-1zM369 548h1v1h-1zM372 548h1v1h-1zM375 548h1v1h-1zM378 548h1v1h-1zM381 548h1v1h-1zM384 548h1v1h-1zM387 548h1v1h-1zM390 548h1v1h-1zM393 548h1v1h-1zM396 548h1v1h-1zM399 548h1v1h-1zM402 548h1v1h-1zM405 548h1v1h-1zM408 548h1v1h-1zM411 548h1v1h-1zM414 548h1v1h-1zM417 548h1v1h-1zM420 548h1v1h-1zM423 548h1v1h-1zM426 548h1v1h-1zM429 548h1v1h-1zM432 548h1v1h-1zM435 548h1v1h-1zM438 548h1v1h-1zM441 548h1v1h-1zM444 548h1v1h-1zM447 548h1v1h-1zM450 548h1v1h-1zM453 548h1v1h-1zM456 548h1v1h-1zM459 548h1v1h-1zM462 548h1v1h-1zM465 548h1v1h-1zM468 548h1v1h-1zM471 548h1v1h-1zM474 548h1v1h-1zM477 548h1v1h-1zM480 548h1v1h-1zM483 548h1v1h-1zM486 548h1v1h-1zM489 548h1v1h-1zM492 548h1v1h-1zM495 548h1v1h-1zM498 548h1v1h-1zM501 548h1v1h-1zM504 548h1v1h-1zM507 548h1v1h-1zM510 548h1v1h-1zM513 548h1v1h-1zM516 548h1v1h-1zM519 548h1v1h-1zM522 548h1v1h-1zM525 548h1v1h-1zM528 548h1v1h-1zM531 548h1v1h-1zM534 548h1v1h-1zM537 548h1v1h-1zM540 548h1v1h-1zM543 548h1v1h-1zM546 548h1v1h-1zM549 548h1v1h-1zM552 548h1v1h-1zM555 548h1v1h-1zM558 548h1v1h-1zM561 548h1v1h-1zM564 548h1v1h-1zM567 548h1v1h-1zM570 548h1v1h-1zM573 548h1v1h-1zM576 548h1v1h-1zM579 548h1v1h-1zM582 548h1v1h-1zM585 548h1v1h-1zM588 548h1v1h-1zM591 548h1v1h-1zM594 548h1v1h-1zM597 548h1v1h-1zM600 548h1v1h-1zM603 548h1v1h-1zM606 548h1v1h-1zM609 548h1v1h-1zM612 548h1v1h-1zM615 548h1v1h-1zM618 548h1v1h-1zM621 548h1v1h-1zM624 548h1v1h-1zM627 548h1v1h-1zM630 548h1v1h-1zM633 548h1v1h-1zM636 548h1v1h-1zM639 548h1v1h-1zM642 548h1v1h-1zM645 548h1v1h-1zM648 548h1v1h-1zM651 548h1v1h-1zM654 548h1v1h-1zM657 548h1v1h-1zM660 548h1v1h-1zM663 548h1v1h-1zM666 548h1v1h-1zM669 548h1v1h-1zM672 548h1v1h-1zM675 548h1v1h-1zM678 548h1v1h-1zM681 548h1v1h-1zM684 548h1v1h-1zM687 548h1v1h-1zM690 548h1v1h-1zM693 548h1v1h-1zM696 548h1v1h-1zM699 548h1v1h-1zM702 548h1v1h-1zM705 548h1v1h-1zM708 548h1v1h-1zM711 548h1v1h-1zM714 548h1v1h-1zM717 548h1v1h-1zM720 548h1v1h-1zM723 548h1v1h-1zM726 548h1v1h-1z" fill="#a8a8a8"/>
<rect x="11" y="580" width="1" height="17" fill="#808080"/>
<rect x="79" y="580" width="1" height="27" fill="#808080"/>
<rect x="151" y="580" width="1" height="27" fill="#808080"/>
<rect x="223" y="580" width="1" height="27" fill="#808080"/>
<rect x="295" y="580" width="1" height="27" fill="#808080"/>
<rect x="367" y="580" width="1" height="27" fill="#808080"/>
<rect x="439" y="580" width="1" height="27" fill="#808080"/>
<rect x="511" y="580" width="1" height="27" fill="#808080"/>
<rect x="583" y="580" width="1" height="27" fill="#808080"/>
<rect x="655" y="580" width="1" height="27" fill="#808080"/>
<rect x="727" y="580" width="1" height="27" fill="#808080"/>
</g>
<g shape-rendering="crispEdges">
<rect x="11" y="269" width="1" height="34" fill="#008000"/>
<rect x="10" y="293" width="3" height="10" fill="#008000"/>
<rect x="15" y="297" width="1" height="24" fill="#ff0000"/>
<rect x="14" y="297" width="3" height="24" fill="#ff0000"/>
<rect x="19" y="286" width="1" height="55" fill="#008000"/>
<rect x="18" y="292" width="3" height="27" fill="#008000"/>
<rect x="23" y="304" width="1" height="15" fill="#ff0000"/>
<rect x="22" y="307" width="3" height="6" fill="#ff0000"/>
<rect x="27" y="274" width="1" height="48" fill="#008000"/>
<rect x="26" y="277" width="3" height="45" fill="#008000"/>
<rect x="31" y="273" width="1" height="21" fill="#008000"/>
<rect x="30" y="273" width="3" height="13" fill="#008000"/>
<rect x="35" y="234" width="1" height="38" fill="#008000"/>
<rect x="34" y="241" width="3" height="31" fill="#008000"/>
<rect x="39" y="227" width="1" height="32" fill="#ff0000"/>
<rect x="38" y="231" width="3" height="28" fill="#ff0000"/>
<rect x="43" y="241" width="1" height="32" fill="#008000"/>
<rect x="42" y="248" width="3" height="9" fill="#008000"/>
<rect x="47" y="255" width="1" height="14" fill="#008000"/>
<rect x="46" y="259" width="3" height="4" fill="#008000"/>
<rect x="51" y="207" width="1" height="40" fill="#008000"/>
<rect x="50" y="207" width="3" height="35" fill="#008000"/>
<rect x="55" y="95" width="1" height="112" fill="#008000"/>
<rect x="54" y="164" width="3" height="15" fill="#008000"/>
<rect x="59" y="162" width="1" height="52" fill="#ff0000"/>
<rect x="58" y="166" width="3" height="41" fill="#ff0000"/>
<rect x="63" y="187" width="1" height="53" fill="#ff0000"/>
<rect x="62" y="209" width="3" height="31" fill="#ff0000"/>
<rect x="67" y="198" width="1" height="25" fill="#008000"/>
<rect x="66" y="206" width="3" height="17" fill="#008000"/>
<rect x="71" y="209" width="1" height="20" fill="#ff0000"/>
<rect x="70" y="213" width="3" height="4" fill="#ff0000"/>
<rect x="75" y="212" width="1" height="30" fill="#ff0000"/>
<rect x="74" y="220" width="3" height="6" fill="#ff0000"/>
<rect x="79" y="197" width="1" height="10" fill="#008000"/>
<rect x="78" y="197" width="3" height="10" fill="#008000"/>
<rect x="83" y="163" width="1" height="17" fill="#ff0000"/>
<rect x="82" y="171" width="3" height="5" fill="#ff0000"/>
<rect x="87" y="175" width="1" height="21" fill="#ff0000"/>
<rect x="86" y="178" width="3" height="6" fill="#ff0000"/>
<rect x="91" y="188" width="1" height="21" fill="#ff0000"/>
<rect x="90" y="188" width="3" height="4" fill="#ff0000"/>
<rect x="95" y="192" width="1" height="46" fill="#ff0000"/>
<rect x="94" y="192" width="3" height="43" fill="#ff0000"/>
<rect x="99" y="216" width="1" height="18" fill="#ff0000"/>
<rect x="98" y="220" width="3" height="9" fill="#ff0000"/>
<rect x="103" y="184" width="1" height="28" fill="#008000"/>
<rect x="102" y="188" width="3" height="24" fill="#008000"/>
<rect x="107" y="180" width="1" height="25" fill="#008000"/>
<rect x="106" y="184" width="3" height="14" fill="#008000"/>
<rect x="111" y="136" width="1" height="57" fill="#008000"/>
<rect x="110" y="141" width="3" height="52" fill="#008000"/>
<rect x="115" y="140" width="1" height="52" fill="#ff0000"/>
<rect x="114" y="140" width="3" height="52" fill="#ff0000"/>
<rect x="119" y="164" width="1" height="69" fill="#ff0000"/>
<rect x="118" y="164" width="3" height="36" fill="#ff0000"/>
<rect x="123" y="161" width="1" height="31" fill="#008000"/>
<rect x="122" y="161" width="3" height="31" fill="#008000"/>
<rect x="127" y="139" width="1" height="21" fill="#008000"/>
<rect x="126" y="144" width="3" height="16" fill="#008000"/>
<rect x="131" y="134" width="1" height="20" fill="#008000"/>
<rect x="130" y="143" width="3" height="11" fill="#008000"/>
<rect x="135" y="144" width="1" height="5" fill="#ff0000"/>
<rect x="134" y="144" width="3" height="5" fill="#ff0000"/>
<rect x="139" y="181" width="1" height="19" fill="#008000"/>
<rect x="138" y="186" width="3" height="3" fill="#008000"/>
<rect x="143" y="174" width="1" height="37" fill="#008000"/>
<rect x="142" y="183" width="3" height="12" fill="#008000"/>
<rect x="147" y="155" width="1" height="32" fill="#008000"/>
<rect x="146" y="171" width="3" height="9" fill="#008000"/>
<rect x="151" y="156" width="1" height="19" fill="#008000"/>
<rect x="150" y="156" width="3" height="16" fill="#008000"/>
<rect x="155" y="140" width="1" height="28" fill="#ff0000"/>
<rect x="154" y="157" width="3" height="9" fill="#ff0000"/>
<rect x="159" y="165" width="1" height="59" fill="#ff0000"/>
<rect x="158" y="165" width="3" height="42" fill="#ff0000"/>
<rect x="163" y="195" width="1" height="28" fill="#ff0000"/>
<rect x="162" y="197" width="3" height="24" fill="#ff0000"/>
<rect x="167" y="191" width="1" height="61" fill="#ff0000"/>
<rect x="166" y="216" width="3" height="15" fill="#ff0000"/>
<rect x="171" y="220" width="1" height="32" fill="#008000"/>
<rect x="170" y="226" width="3" height="7" fill="#008000"/>
<rect x="175" y="227" width="1" height="26" fill="#ff0000"/>
<rect x="174" y="239" width="3" height="8" fill="#ff0000"/>
<rect x="179" y="244" width="1" height="35" fill="#ff0000"/>
<rect x="178" y="248" width="3" height="24" fill="#ff0000"/>
<rect x="183" y="254" width="1" height="33" fill="#008000"/>
<rect x="182" y="254" width="3" height="21" fill="#008000"/>
<rect x="187" y="246" width="1" height="32" fill="#ff0000"/>
<rect x="186" y="251" width="3" height="24" fill="#ff0000"/>
<rect x="191" y="271" width="1" height="11" fill="#ff0000"/>
<rect x="190" y="274" width="3" height="3" fill="#ff0000"/>
<rect x="195" y="285" width="1" height="25" fill="#ff0000"/>
<rect x="194" y="285" width="3" height="6" fill="#ff0000"/>
<rect x="199" y="285" width="1" height="27" fill="#ff0000"/>
<rect x="198" y="288" width="3" height="22" fill="#ff0000"/>
<rect x="203" y="304" width="1" height="38" fill="#ff0000"/>
<rect x="202" y="309" width="3" height="24" fill="#ff0000"/>
<rect x="207" y="331" width="1" height="37" fill="#ff0000"/>
<rect x="206" y="331" width="3" height="23" fill="#ff0000"/>
<rect x="211" y="333" width="1" height="34" fill="#ff0000"/>
<rect x="210" y="348" width="3" height="17" fill="#ff0000"/>
<rect x="215" y="346" width="1" height="27" fill="#008000"/>
<rect x="214" y="354" width="3" height="11" fill="#008000"/>
<rect x="219" y="348" width="1" height="41" fill="#ff0000"/>
<rect x="218" y="357" width="3" height="19" fill="#ff0000"/>
<rect x="223" y="376" width="1" height="29" fill="#8c8c8c"/>
<rect x="223" y="376" width="1" height="1" fill="#3c3c3c"/>
<rect x="223" y="378" width="1" height="1" fill="#3c3c3c"/>
<rect x="223" y="380" width="1" height="1" fill="#3c3c3c"/>
<rect x="223" y="382" width="1" height="1" fill="#3c3c3c"/>
<rect x="223" y="384" width="1" height="1" fill="#3c3c3c"/>
<rect x="223" y="386" width="1" height="1" fill="#3c3c3c"/>
<rect x="223" y="388" width="1" height="1" fill="#3c3c3c"/>
<rect x="223" y="390" width="1" height="1" fill="#3c3c3c"/>
<rect x="223" y="392" width="1" height="1" fill="#3c3c3c"/>
<rect x="223" y="394" width="1" height="1" fill="#3c3c3c"/>
<rect x="223" y="396" width="1" height="1" fill="#3c3c3c"/>
<rect x="223" y="398" width="1" height="1" fill="#3c3c3c"/>
<rect x="223" y="400" width="1" height="1" fill="#3c3c3c"/>
<rect x="223" y="402" width="1" height="1" fill="#3c3c3c"/>
<rect x="223" y="404" width="1" height="1" fill="#3c3c3c"/>
<rect x="222" y="387" width="3" height="1" fill="#505050"/>
<rect x="227" y="355" width="1" height="33" fill="#008000"/>
<rect x="226" y="357" width="3" height="29" fill="#008000"/>
<rect x="231" y="332" width="1" height="34" fill="#ff0000"/>
<rect x="230" y="348" width="3" height="6" fill="#ff0000"/>
<rect x="235" y="329" width="1" height="32" fill="#008000"/>
<rect x="234" y="336" width="3" height="18" fill="#008000"/>
<rect x="239" y="341" width="1" height="26" fill="#ff0000"/>
<rect x="238" y="344" width="3" height="20" fill="#ff0000"/>
<rect x="243" y="355" width="1" height="22" fill="#ff0000"/>
<rect x="242" y="366" width="3" height="9" fill="#ff0000"/>
<rect x="247" y="375" width="1" height="6" fill="#ff0000"/>
<rect x="246" y="375" width="3" height="5" fill="#ff0000"/>
<rect x="251" y="364" width="1" height="25" fill="#008000"/>
<rect x="250" y="366" width="3" height="19" fill="#008000"/>
<rect x="255" y="338" width="1" height="37" fill="#008000"/>
<rect x="254" y="342" width="3" height="22" fill="#008000"/>
<rect x="259" y="330" width="1" height="25" fill="#ff0000"/>
<rect x="258" y="342" width="3" height="7" fill="#ff0000"/>
<rect x="263" y="334" width="1" height="19" fill="#ff0000"/>
<rect x="262" y="346" width="3" height="7" fill="#ff0000"/>
<rect x="267" y="329" width="1" height="22" fill="#008000"/>
<rect x="266" y="340" width="3" height="11" fill="#008000"/>
<rect x="271" y="320" width="1" height="31" fill="#ff0000"/>
<rect x="270" y="335" width="3" height="16" fill="#ff0000"/>
<rect x="275" y="306" width="1" height="44" fill="#008000"/>
<rect x="274" y="316" width="3" height="34" fill="#008000"/>
<rect x="279" y="296" width="1" height="37" fill="#ff0000"/>
<rect x="278" y="305" width="3" height="10" fill="#ff0000"/>
<rect x="283" y="309" width="1" height="65" fill="#ff0000"/>
<rect x="282" y="314" width="3" height="10" fill="#ff0000"/>
<rect x="287" y="242" width="1" height="51" fill="#008000"/>
<rect x="286" y="250" width="3" height="41" fill="#008000"/>
<rect x="291" y="227" width="1" height="48" fill="#008000"/>
<rect x="290" y="243" width="3" height="6" fill="#008000"/>
<rect x="295" y="237" width="1" height="31" fill="#ff0000"/>
<rect x="294" y="244" width="3" height="7" fill="#ff0000"/>
<rect x="299" y="208" width="1" height="41" fill="#008000"/>
<rect x="298" y="215" width="3" height="30" fill="#008000"/>
<rect x="303" y="207" width="1" height="12" fill="#008000"/>
<rect x="302" y="207" width="3" height="9" fill="#008000"/>
<rect x="307" y="172" width="1" height="35" fill="#008000"/>
<rect x="306" y="190" width="3" height="17" fill="#008000"/>
<rect x="311" y="188" width="1" height="52" fill="#ff0000"/>
<rect x="310" y="188" width="3" height="33" fill="#ff0000"/>
<rect x="315" y="191" width="1" height="38" fill="#008000"/>
<rect x="314" y="202" width="3" height="15" fill="#008000"/>
<rect x="319" y="197" width="1" height="24" fill="#ff0000"/>
<rect x="318" y="197" width="3" height="15" fill="#ff0000"/>
<rect x="323" y="212" width="1" height="35" fill="#ff0000"/>
<rect x="322" y="212" width="3" height="30" fill="#ff0000"/>
<rect x="327" y="228" width="1" height="31" fill="#ff0000"/>
<rect x="326" y="242" width="3" height="12" fill="#ff0000"/>
<rect x="331" y="237" width="1" height="43" fill="#008000"/>
<rect x="330" y="237" width="3" height="22" fill="#008000"/>
<rect x="335" y="167" width="1" height="70" fill="#008000"/>
<rect x="334" y="176" width="3" height="61" fill="#008000"/>
<rect x="339" y="176" width="1" height="24" fill="#ff0000"/>
<rect x="338" y="179" width="3" height="14" fill="#ff0000"/>
<rect x="343" y="190" width="1" height="83" fill="#ff0000"/>
<rect x="342" y="193" width="3" height="68" fill="#ff0000"/>
<rect x="347" y="227" width="1" height="36" fill="#008000"/>
<rect x="346" y="241" width="3" height="22" fill="#008000"/>
<rect x="351" y="232" width="1" height="37" fill="#ff0000"/>
<rect x="350" y="237" width="3" height="32" fill="#ff0000"/>
<rect x="355" y="241" width="1" height="34" fill="#008000"/>
<rect x="354" y="262" width="3" height="13" fill="#008000"/>
<rect x="359" y="258" width="1" height="7" fill="#ff0000"/>
<rect x="358" y="261" width="3" height="4" fill="#ff0000"/>
<rect x="363" y="265" width="1" height="20" fill="#ff0000"/>
<rect x="362" y="267" width="3" height="8" fill="#ff0000"/>
<rect x="367" y="270" width="1" height="26" fill="#ff0000"/>
<rect x="366" y="270" width="3" height="15" fill="#ff0000"/>
<rect x="371" y="219" width="1" height="69" fill="#008000"/>
<rect x="370" y="233" width="3" height="55" fill="#008000"/>
<rect x="375" y="229" width="1" height="24" fill="#ff0000"/>
<rect x="374" y="234" width="3" height="14" fill="#ff0000"/>
<rect x="379" y="233" width="1" height="33" fill="#008000"/>
<rect x="378" y="246" width="3" height="7" fill="#008000"/>
<rect x="383" y="230" width="1" height="20" fill="#008000"/>
<rect x="382" y="240" width="3" height="6" fill="#008000"/>
<rect x="387" y="212" width="1" height="59" fill="#ff0000"/>
<rect x="386" y="237" width="3" height="34" fill="#ff0000"/>
<rect x="391" y="252" width="1" height="46" fill="#ff0000"/>
<rect x="390" y="269" width="3" height="9" fill="#ff0000"/>
<rect x="395" y="233" width="1" height="43" fill="#008000"/>
<rect x="394" y="235" width="3" height="41" fill="#008000"/>
<rect x="399" y="240" width="1" height="35" fill="#ff0000"/>
<rect x="398" y="240" width="3" height="25" fill="#ff0000"/>
<rect x="403" y="257" width="1" height="16" fill="#ff0000"/>
<rect x="402" y="266" width="3" height="2" fill="#ff0000"/>
<rect x="407" y="232" width="1" height="30" fill="#008000"/>
<rect x="406" y="253" width="3" height="9" fill="#008000"/>
<rect x="411" y="250" width="1" height="53" fill="#ff0000"/>
<rect x="410" y="252" width="3" height="40" fill="#ff0000"/>
<rect x="415" y="283" width="1" height="9" fill="#008000"/>
<rect x="414" y="287" width="3" height="5" fill="#008000"/>
<rect x="419" y="264" width="1" height="21" fill="#ff0000"/>
<rect x="418" y="268" width="3" height="17" fill="#ff0000"/>
<rect x="423" y="254" width="1" height="29" fill="#008000"/>
<rect x="422" y="259" width="3" height="15" fill="#008000"/>
<rect x="427" y="262" width="1" height="73" fill="#ff0000"/>
<rect x="426" y="262" width="3" height="69" fill="#ff0000"/>
<rect x="431" y="319" width="1" height="25" fill="#ff0000"/>
<rect x="430" y="331" width="3" height="8" fill="#ff0000"/>
<rect x="435" y="321" width="1" height="19" fill="#008000"/>
<rect x="434" y="326" width="3" height="7" fill="#008000"/>
<rect x="439" y="325" width="1" height="31" fill="#ff0000"/>
<rect x="438" y="334" width="3" height="18" fill="#ff0000"/>
<rect x="443" y="322" width="1" height="39" fill="#008000"/>
<rect x="442" y="322" width="3" height="35" fill="#008000"/>
<rect x="447" y="290" width="1" height="45" fill="#ff0000"/>
<rect x="446" y="320" width="3" height="13" fill="#ff0000"/>
<rect x="451" y="324" width="1" height="27" fill="#ff0000"/>
<rect x="450" y="329" width="3" height="4" fill="#ff0000"/>
<rect x="455" y="295" width="1" height="31" fill="#ff0000"/>
<rect x="454" y="311" width="3" height="11" fill="#ff0000"/>
<rect x="459" y="316" width="1" height="19" fill="#ff0000"/>
<rect x="458" y="323" width="3" height="3" fill="#ff0000"/>
<rect x="463" y="325" width="1" height="20" fill="#ff0000"/>
<rect x="462" y="330" width="3" height="15" fill="#ff0000"/>
<rect x="467" y="339" width="1" height="33" fill="#ff0000"/>
<rect x="466" y="346" width="3" height="23" fill="#ff0000"/>
<rect x="471" y="355" width="1" height="10" fill="#008000"/>
<rect x="470" y="355" width="3" height="10" fill="#008000"/>
<rect x="475" y="339" width="1" height="36" fill="#008000"/>
<rect x="474" y="346" width="3" height="15" fill="#008000"/>
<rect x="479" y="327" width="1" height="23" fill="#008000"/>
<rect x="478" y="330" width="3" height="16" fill="#008000"/>
<rect x="483" y="326" width="1" height="27" fill="#ff0000"/>
<rect x="482" y="330" width="3" height="17" fill="#ff0000"/>
<rect x="487" y="323" width="1" height="33" fill="#008000"/>
<rect x="486" y="327" width="3" height="26" fill="#008000"/>
<rect x="491" y="328" width="1" height="21" fill="#ff0000"/>
<rect x="490" y="328" width="3" height="16" fill="#ff0000"/>
<rect x="495" y="344" width="1" height="43" fill="#ff0000"/>
<rect x="494" y="344" width="3" height="34" fill="#ff0000"/>
<rect x="499" y="359" width="1" height="41" fill="#ff0000"/>
<rect x="498" y="376" width="3" height="6" fill="#ff0000"/>
<rect x="503" y="375" width="1" height="23" fill="#ff0000"/>
<rect x="502" y="377" width="3" height="8" fill="#ff0000"/>
<rect x="507" y="372" width="1" height="37" fill="#ff0000"/>
<rect x="506" y="385" width="3" height="24" fill="#ff0000"/>
<rect x="511" y="408" width="1" height="39" fill="#ff0000"/>
<rect x="510" y="408" width="3" height="39" fill="#ff0000"/>
<rect x="515" y="443" width="1" height="67" fill="#ff0000"/>
<rect x="514" y="446" width="3" height="64" fill="#ff0000"/>
<rect x="519" y="504" width="1" height="45" fill="#ff0000"/>
<rect x="518" y="506" width="3" height="22" fill="#ff0000"/>
<rect x="523" y="499" width="1" height="52" fill="#008000"/>
<rect x="522" y="520" width="3" height="7" fill="#008000"/>
<rect x="527" y="508" width="1" height="18" fill="#8c8c8c"/>
<rect x="527" y="508" width="1" height="1" fill="#3c3c3c"/>
<rect x="527" y="510" width="1" height="1" fill="#3c3c3c"/>
<rect x="527" y="512" width="1" height="1" fill="#3c3c3c"/>
<rect x="527" y="514" width="1" height="1" fill="#3c3c3c"/>
<rect x="527" y="516" width="1" height="1" fill="#3c3c3c"/>
<rect x="527" y="518" width="1" height="1" fill="#3c3c3c"/>
<rect x="527" y="520" width="1" height="1" fill="#3c3c3c"/>
<rect x="527" y="522" width="1" height="1" fill="#3c3c3c"/>
<rect x="527" y="524" width="1" height="1" fill="#3c3c3c"/>
<rect x="526" y="518" width="3" height="1" fill="#505050"/>
<rect x="531" y="492" width="1" height="28" fill="#008000"/>
<rect x="530" y="507" width="3" height="13" fill="#008000"/>
<rect x="535" y="478" width="1" height="32" fill="#008000"/>
<rect x="534" y="484" width="3" height="22" fill="#008000"/>
<rect x="539" y="478" width="1" height="29" fill="#ff0000"/>
<rect x="538" y="488" width="3" height="8" fill="#ff0000"/>
<rect x="543" y="494" width="1" height="36" fill="#ff0000"/>
<rect x="542" y="494" width="3" height="9" fill="#ff0000"/>
<rect x="547" y="489" width="1" height="27" fill="#ff0000"/>
<rect x="546" y="503" width="3" height="11" fill="#ff0000"/>
<rect x="551" y="492" width="1" height="26" fill="#008000"/>
<rect x="550" y="494" width="3" height="20" fill="#008000"/>
<rect x="555" y="492" width="1" height="53" fill="#ff0000"/>
<rect x="554" y="492" width="3" height="40" fill="#ff0000"/>
<rect x="559" y="519" width="1" height="26" fill="#008000"/>
<rect x="558" y="522" width="3" height="6" fill="#008000"/>
<rect x="563" y="439" width="1" height="84" fill="#008000"/>
<rect x="562" y="493" width="3" height="27" fill="#008000"/>
<rect x="567" y="488" width="1" height="36" fill="#ff0000"/>
<rect x="566" y="495" width="3" height="2" fill="#ff0000"/>
<rect x="571" y="466" width="1" height="33" fill="#008000"/>
<rect x="570" y="485" width="3" height="8" fill="#008000"/>
<rect x="575" y="483" width="1" height="26" fill="#ff0000"/>
<rect x="574" y="483" width="3" height="26" fill="#ff0000"/>
<rect x="579" y="490" width="1" height="40" fill="#008000"/>
<rect x="578" y="492" width="3" height="13" fill="#008000"/>
<rect x="583" y="484" width="1" height="27" fill="#ff0000"/>
<rect x="582" y="490" width="3" height="20" fill="#ff0000"/>
<rect x="587" y="511" width="1" height="20" fill="#ff0000"/>
<rect x="586" y="520" width="3" height="5" fill="#ff0000"/>
<rect x="591" y="523" width="1" height="30" fill="#ff0000"/>
<rect x="590" y="523" width="3" height="3" fill="#ff0000"/>
<rect x="595" y="529" width="1" height="27" fill="#ff0000"/>
<rect x="594" y="529" width="3" height="17" fill="#ff0000"/>
<rect x="599" y="531" width="1" height="22" fill="#008000"/>
<rect x="598" y="534" width="3" height="12" fill="#008000"/>
<rect x="603" y="534" width="1" height="18" fill="#ff0000"/>
<rect x="602" y="534" width="3" height="15" fill="#ff0000"/>
<rect x="607" y="542" width="1" height="20" fill="#ff0000"/>
<rect x="606" y="549" width="3" height="11" fill="#ff0000"/>
<rect x="611" y="547" width="1" height="16" fill="#ff0000"/>
<rect x="610" y="557" width="3" height="3" fill="#ff0000"/>
<rect x="615" y="492" width="1" height="74" fill="#008000"/>
<rect x="614" y="495" width="3" height="65" fill="#008000"/>
<rect x="619" y="499" width="1" height="43" fill="#ff0000"/>
<rect x="618" y="499" width="3" height="43" fill="#ff0000"/>
<rect x="623" y="503" width="1" height="64" fill="#008000"/>
<rect x="622" y="536" width="3" height="12" fill="#008000"/>
<rect x="627" y="525" width="1" height="24" fill="#ff0000"/>
<rect x="626" y="534" width="3" height="15" fill="#ff0000"/>
<rect x="631" y="527" width="1" height="29" fill="#008000"/>
<rect x="630" y="548" width="3" height="3" fill="#008000"/>
<rect x="635" y="498" width="1" height="72" fill="#008000"/>
<rect x="634" y="509" width="3" height="37" fill="#008000"/>
<rect x="639" y="477" width="1" height="51" fill="#008000"/>
<rect x="638" y="483" width="3" height="27" fill="#008000"/>
<rect x="643" y="464" width="1" height="29" fill="#ff0000"/>
<rect x="642" y="475" width="3" height="13" fill="#ff0000"/>
<rect x="647" y="478" width="1" height="30" fill="#ff0000"/>
<rect x="646" y="490" width="3" height="3" fill="#ff0000"/>
<rect x="651" y="452" width="1" height="35" fill="#008000"/>
<rect x="650" y="455" width="3" height="32" fill="#008000"/>
<rect x="655" y="453" width="1" height="38" fill="#ff0000"/>
<rect x="654" y="453" width="3" height="32" fill="#ff0000"/>
<rect x="659" y="452" width="1" height="34" fill="#008000"/>
<rect x="658" y="457" width="3" height="29" fill="#008000"/>
<rect x="663" y="462" width="1" height="17" fill="#ff0000"/>
<rect x="662" y="462" width="3" height="12" fill="#ff0000"/>
<rect x="667" y="453" width="1" height="33" fill="#008000"/>
<rect x="666" y="467" width="3" height="7" fill="#008000"/>
<rect x="671" y="435" width="1" height="34" fill="#8c8c8c"/>
<rect x="671" y="435" width="1" height="1" fill="#3c3c3c"/>
<rect x="671" y="437" width="1" height="1" fill="#3c3c3c"/>
<rect x="671" y="439" width="1" height="1" fill="#3c3c3c"/>
<rect x="671" y="441" width="1" height="1" fill="#3c3c3c"/>
<rect x="671" y="443" width="1" height="1" fill="#3c3c3c"/>
<rect x="671" y="445" width="1" height="1" fill="#3c3c3c"/>
<rect x="671" y="447" width="1" height="1" fill="#3c3c3c"/>
<rect x="671" y="449" width="1" height="1" fill="#3c3c3c"/>
<rect x="671" y="451" width="1" height="1" fill="#3c3c3c"/>
<rect x="671" y="453" width="1" height="1" fill="#3c3c3c"/>
<rect x="671" y="455" width="1" height="1" fill="#3c3c3c"/>
<rect x="671" y="457" width="1" height="1" fill="#3c3c3c"/>
<rect x="671" y="459" width="1" height="1" fill="#3c3c3c"/>
<rect x="671" y="461" width="1" height="1" fill="#3c3c3c"/>
<rect x="671" y="463" width="1" height="1" fill="#3c3c3c"/>
<rect x="671" y="465" width="1" height="1" fill="#3c3c3c"/>
<rect x="671" y="467" width="1" height="1" fill="#3c3c3c"/>
<rect x="670" y="464" width="3" height="1" fill="#505050"/>
<rect x="675" y="415" width="1" height="51" fill="#008000"/>
<rect x="674" y="429" width="3" height="37" fill="#008000"/>
<rect x="679" y="369" width="1" height="54" fill="#008000"/>
<rect x="678" y="390" width="3" height="33" fill="#008000"/>
<rect x="683" y="368" width="1" height="27" fill="#008000"/>
<rect x="682" y="368" width="3" height="23" fill="#008000"/>
<rect x="687" y="348" width="1" height="43" fill="#ff0000"/>
<rect x="686" y="369" width="3" height="10" fill="#ff0000"/>
<rect x="691" y="338" width="1" height="57" fill="#008000"/>
<rect x="690" y="367" width="3" height="15" fill="#008000"/>
<rect x="695" y="362" width="1" height="20" fill="#ff0000"/>
<rect x="694" y="365" width="3" height="14" fill="#ff0000"/>
<rect x="699" y="332" width="1" height="42" fill="#008000"/>
<rect x="698" y="346" width="3" height="28" fill="#008000"/>
<rect x="703" y="346" width="1" height="33" fill="#ff0000"/>
<rect x="702" y="346" width="3" height="19" fill="#ff0000"/>
<rect x="707" y="336" width="1" height="36" fill="#008000"/>
<rect x="706" y="342" width="3" height="26" fill="#008000"/>
<rect x="711" y="308" width="1" height="39" fill="#008000"/>
<rect x="710" y="323" width="3" height="21" fill="#008000"/>
<rect x="715" y="313" width="1" height="16" fill="#008000"/>
<rect x="714" y="318" width="3" height="2" fill="#008000"/>
<rect x="719" y="301" width="1" height="24" fill="#008000"/>
<rect x="718" y="303" width="3" height="18" fill="#008000"/>
<rect x="723" y="304" width="1" height="25" fill="#ff0000"/>
<rect x="722" y="304" width="3" height="25" fill="#ff0000"/>
<rect x="727" y="312" width="1" height="22" fill="#008000"/>
<rect x="726" y="318" width="3" height="1" fill="#008000"/>
</g>
<polyline points="11,342 19.5,342 19.5,341 24.5,341 27,327 32,322 35,292 48,291 51,262 52,247 53.5,227 55,215 108,215 109.5,204 111,192 159,192" fill="none" stroke="#0000ff" stroke-width="2" stroke-linejoin="miter" shape-rendering="crispEdges"/>
<polyline points="159,191 161,180 163.7,171 166.7,180 171,180 176.6,205 178.8,221 182,222 185,223.5 191.7,227.5 195.5,241 199.3,259 202.4,276 206.9,300 210.7,317 214.5,317 216.8,319 222.8,340 271,340" fill="none" stroke="#ff00ff" stroke-width="2" stroke-linejoin="miter" shape-rendering="crispEdges"/>
<polyline points="271,340 284,340 284,331 285,330 286,320 286.7,300 291,292 296.3,292 298,268 300.4,262 305,255 307.2,241 332,241 336,227 339,227" fill="none" stroke="#0000ff" stroke-width="2" stroke-linejoin="miter" shape-rendering="crispEdges"/>
<polyline points="339,227 344.4,209 347.4,210 351.2,219 358.8,219 363.3,225 368,240 407.5,240 410.5,244 423.4,244 424.4,253 426.4,264 427.2,283 430.2,290 434.8,290 436.3,291.4 439,304 462.8,304 464.4,306.6 467.4,320.7 488,320.8 491.8,322 494,326.4 497.9,334 503.2,337 504.7,340 506.2,353.7 507.7,362.8 509.2,378 510.5,389 511.5,400 512.3,417 513,433 514.6,448 516,466.5 516.8,470.6 519,483.5 550.2,483.5 554,486.6 591.2,486.6 592.6,492 595,500.5 598.7,501.2 604,504.3 607,515.7 635,515.7" fill="none" stroke="#ff00ff" stroke-width="2" stroke-linejoin="miter" shape-rendering="crispEdges"/>
<polyline points="635,515.7 648.2,515.6 651.2,500.4 672.5,500 674.8,478.4 677,464.7 679.3,440 681.6,423 683.9,415 696,413.4 697.5,402.8 699,393.7 705,392 708.2,390 709.7,382.3 711,372 715.7,366 719.5,351 727,351" fill="none" stroke="#0000ff" stroke-width="2" stroke-linejoin="miter" shape-rendering="crispEdges"/>
<text x="731" y="133" font-size="11" fill="#1c1c28">37</text>
<text x="731" y="203" font-size="11" fill="#1c1c28">36</text>
<text x="731" y="273" font-size="11" fill="#1c1c28">35</text>
<text x="731" y="343" font-size="11" fill="#1c1c28">34</text>
<text x="731" y="412" font-size="11" fill="#1c1c28">33</text>
<text x="731" y="482" font-size="11" fill="#1c1c28">32</text>
<text x="731" y="552" font-size="11" fill="#1c1c28">31</text>
<path d="M730 318.5 L735 313 H791 V324 H735 Z" fill="#1a1a1a"/>
<text x="735.5" y="322" font-size="11" fill="#fff" textLength="26" lengthAdjust="spacingAndGlyphs">34,29</text>
<path d="M730 351.5 L735 346 H791 V357 H735 Z" fill="#1414ff"/>
<text x="735.5" y="355" font-size="11" fill="#fff" textLength="26" lengthAdjust="spacingAndGlyphs">33,82</text>
<text x="15" y="592" font-size="11" fill="#1c1c28" textLength="28" lengthAdjust="spacingAndGlyphs">20:00</text>
<path d="M11 597 H62 L69 604.5 L62 612 H11 Z" fill="#000"/>
<text x="15" y="607.5" font-size="11" fill="#fff" textLength="44.5" lengthAdjust="spacingAndGlyphs">27/01/16</text>
<text x="83" y="592" font-size="11" fill="#1c1c28" textLength="28" lengthAdjust="spacingAndGlyphs">23:00</text>
<text x="83" y="607.5" font-size="11" fill="#1c1c28" textLength="44.5" lengthAdjust="spacingAndGlyphs">28/01/16</text>
<text x="155" y="592" font-size="11" fill="#1c1c28" textLength="28" lengthAdjust="spacingAndGlyphs">13:00</text>
<text x="155" y="607.5" font-size="11" fill="#1c1c28" textLength="44.5" lengthAdjust="spacingAndGlyphs">01/02/16</text>
<text x="227" y="592" font-size="11" fill="#1c1c28" textLength="28" lengthAdjust="spacingAndGlyphs">17:00</text>
<text x="227" y="607.5" font-size="11" fill="#1c1c28" textLength="44.5" lengthAdjust="spacingAndGlyphs">02/02/16</text>
<text x="299" y="592" font-size="11" fill="#1c1c28" textLength="28" lengthAdjust="spacingAndGlyphs">21:00</text>
<text x="299" y="607.5" font-size="11" fill="#1c1c28" textLength="44.5" lengthAdjust="spacingAndGlyphs">03/02/16</text>
<text x="371" y="592" font-size="11" fill="#1c1c28" textLength="28" lengthAdjust="spacingAndGlyphs">11:00</text>
<text x="371" y="607.5" font-size="11" fill="#1c1c28" textLength="44.5" lengthAdjust="spacingAndGlyphs">05/02/16</text>
<text x="443" y="592" font-size="11" fill="#1c1c28" textLength="28" lengthAdjust="spacingAndGlyphs">15:00</text>
<text x="443" y="607.5" font-size="11" fill="#1c1c28" textLength="44.5" lengthAdjust="spacingAndGlyphs">08/02/16</text>
<text x="515" y="592" font-size="11" fill="#1c1c28" textLength="28" lengthAdjust="spacingAndGlyphs">19:00</text>
<text x="515" y="607.5" font-size="11" fill="#1c1c28" textLength="44.5" lengthAdjust="spacingAndGlyphs">09/02/16</text>
<text x="587" y="592" font-size="11" fill="#1c1c28" textLength="28" lengthAdjust="spacingAndGlyphs">23:00</text>
<text x="587" y="607.5" font-size="11" fill="#1c1c28" textLength="44.5" lengthAdjust="spacingAndGlyphs">10/02/16</text>
<text x="659" y="592" font-size="11" fill="#1c1c28" textLength="28" lengthAdjust="spacingAndGlyphs">13:00</text>
<text x="659" y="607.5" font-size="11" fill="#1c1c28" textLength="44.5" lengthAdjust="spacingAndGlyphs">12/02/16</text>
<text x="731" y="592" font-size="11" fill="#1c1c28" textLength="28" lengthAdjust="spacingAndGlyphs">17:00</text>
<rect x="727" y="597" width="49" height="15" fill="#000"/>
<path d="M776 596 L785 604.5 L776 613 Z" fill="#ff0000"/>
<text x="731" y="607.5" font-size="11" fill="#fff" textLength="44.5" lengthAdjust="spacingAndGlyphs">15/02/16</text>
<text x="16" y="43" font-size="11" fill="#2a2a2a" textLength="115" lengthAdjust="spacingAndGlyphs">BRJ6=ФОРТС(BR-4.16)</text>
<text x="137" y="43" font-size="11" fill="#3c3cdc" textLength="126" lengthAdjust="spacingAndGlyphs">NRTRm(BRJ6=ФОРТС.Cl)</text>
<path d="M14.10 7.20 L16.51 12.48 L22.28 13.14 L18.00 17.07 L19.15 22.76 L14.10 19.90 L9.05 22.76 L10.20 17.07 L5.92 13.14 L11.69 12.48 Z" fill="#14a8e0" stroke="#14a8e0" stroke-width="0.6" stroke-linejoin="round"/>
<text x="28.5" y="22" font-size="17" fill="#f0a020">BRJ6=ФОРТС</text>
<text x="150.5" y="22" font-size="17" fill="#f0a020">H1</text>
<rect x="182" y="5" width="1" height="20" fill="#3a3a3a"/>
<rect x="206" y="5" width="1" height="20" fill="#3a3a3a"/>
<rect x="233" y="5" width="1" height="20" fill="#3a3a3a"/>
<rect x="260" y="5" width="1" height="20" fill="#3a3a3a"/>
<rect x="287" y="5" width="1" height="20" fill="#3a3a3a"/>
<rect x="314" y="5" width="1" height="20" fill="#3a3a3a"/>
<rect x="717" y="5" width="1" height="20" fill="#3a3a3a"/>
<rect x="187" y="11" width="1" height="13" fill="#fff"/>
<rect x="185" y="12" width="5" height="10" fill="#fff"/>
<rect x="186" y="13" width="3" height="8" fill="#a8a8a8"/>
<rect x="193" y="7" width="1" height="13" fill="#fff"/>
<rect x="191" y="9" width="5" height="9" fill="#fff"/>
<rect x="192" y="10" width="3" height="7" fill="#a8a8a8"/>
<rect x="199" y="6" width="1" height="13" fill="#fff"/>
<rect x="197" y="8" width="5" height="9" fill="#fff"/>
<rect x="198" y="9" width="3" height="7" fill="#a8a8a8"/>
<g transform="translate(221.4,14.4) rotate(-45) scale(0.85)"><path d="M-9 0 L-5 -3.5 H6 V3.5 H-5 Z" fill="#202020" stroke="#fff" stroke-width="1.1"/><path d="M-4.5 -1.5 H5 M-4.5 1.5 H5" stroke="#e0e0e0" stroke-width="0.9" stroke-dasharray="1,1"/><path d="M-8.6 0 L-5 -3.2 V3.2 Z" fill="#bdbdbd"/><rect x="5.5" y="-3.5" width="3.5" height="7" fill="#dcdcdc" stroke="#fff" stroke-width="1"/><rect x="-10" y="-1" width="2.2" height="2" fill="#fff"/></g>
<g shape-rendering="crispEdges">
<rect x="238" y="10" width="20" height="1" fill="#8a8a8a"/>
<rect x="238" y="19" width="20" height="1" fill="#8a8a8a"/>
<rect x="239" y="11" width="3" height="5" fill="#fff"/>
<rect x="241" y="9" width="3" height="7" fill="#fff"/>
<rect x="243" y="9" width="3" height="7" fill="#fff"/>
<rect x="245" y="15" width="3" height="3" fill="#fff"/>
<rect x="247" y="15" width="3" height="6" fill="#fff"/>
<rect x="249" y="15" width="3" height="6" fill="#fff"/>
<rect x="251" y="15" width="3" height="3" fill="#fff"/>
<rect x="253" y="11" width="3" height="5" fill="#fff"/>
<rect x="255" y="9" width="3" height="7" fill="#fff"/>
<rect x="240" y="12" width="1" height="3" fill="#262626"/>
<rect x="242" y="10" width="1" height="5" fill="#262626"/>
<rect x="244" y="10" width="1" height="5" fill="#262626"/>
<rect x="246" y="16" width="1" height="1" fill="#262626"/>
<rect x="248" y="16" width="1" height="4" fill="#262626"/>
<rect x="250" y="16" width="1" height="4" fill="#262626"/>
<rect x="252" y="16" width="1" height="1" fill="#262626"/>
<rect x="254" y="12" width="1" height="3" fill="#262626"/>
<rect x="256" y="10" width="1" height="5" fill="#262626"/>
</g>
<path d="M270 7 V22 L273.5 18.8 L276.3 23.8 L278.6 22.6 L276.2 17.8 L280.5 17.8 Z" fill="#1c1c1c" stroke="#fff" stroke-width="1.3" stroke-linejoin="miter"/>
<g fill="#fff" shape-rendering="crispEdges"><rect x="294" y="7" width="3" height="3"/><rect x="294" y="11" width="5" height="3"/><rect x="294" y="15" width="8" height="3"/><rect x="302" y="16" width="8" height="1"/><rect x="294" y="19" width="5" height="3"/></g>
<circle cx="705.5" cy="14.8" r="8.8" fill="#fff"/>
<path d="M708.6 11.8 C707.9 10.5 706.7 9.9 705.4 9.9 C703.6 9.9 702.4 11 702.4 12.5 C702.4 14.1 703.8 14.7 705.5 15.1 C707.4 15.6 708.7 16.3 708.7 18 C708.7 19.5 707.3 20.4 705.5 20.4 C703.9 20.4 702.6 19.7 702 18.4" fill="none" stroke="#000" stroke-width="2.5"/>
<path d="M705.5 7 V10.5 M705.5 19.5 V22.8" stroke="#000" stroke-width="2"/>
<path d="M729.6 9.6 H733.4 V16 H736.2 L731.5 21.3 L726.8 16 H729.6 Z" fill="#262626" stroke="#fff" stroke-width="1.1"/>
<rect x="752.5" y="11" width="12.5" height="9.8" fill="#959595" stroke="#000" stroke-width="1"/>
<rect x="754.6" y="14" width="8.4" height="4.8" fill="#141414"/>
<rect x="756.2" y="15.6" width="5.2" height="1.5" fill="#959595"/>
<path d="M776.8 10.8 L785 19 M785 10.8 L776.8 19" stroke="#000" stroke-width="5" stroke-linecap="round"/>
<path d="M776.8 10.8 L785 19 M785 10.8 L776.8 19" stroke="#9a9a9a" stroke-width="3" stroke-linecap="round"/>
<circle cx="477.6" cy="43.5" r="10.2" fill="#dedede" stroke="#c8c8c8" stroke-width="1.8"/>
<circle cx="502.6" cy="43.5" r="10.2" fill="#dedede" stroke="#c8c8c8" stroke-width="1.8"/>
<circle cx="527.6" cy="43.5" r="10.2" fill="#dedede" stroke="#c8c8c8" stroke-width="1.8"/>
<circle cx="552.6" cy="43.5" r="10.2" fill="#dedede" stroke="#c8c8c8" stroke-width="1.8"/>
<circle cx="577.6" cy="43.5" r="10.2" fill="#dedede" stroke="#c8c8c8" stroke-width="1.8"/>
<circle cx="602.6" cy="43.5" r="10.2" fill="#dedede" stroke="#c8c8c8" stroke-width="1.8"/>
<circle cx="627.6" cy="43.5" r="10.2" fill="#dedede" stroke="#c8c8c8" stroke-width="1.8"/>
<circle cx="652.6" cy="43.5" r="10.2" fill="#dedede" stroke="#c8c8c8" stroke-width="1.8"/>
<circle cx="677.6" cy="43.5" r="10.2" fill="#dedede" stroke="#c8c8c8" stroke-width="1.8"/>
<circle cx="702.6" cy="43.5" r="10.2" fill="#dedede" stroke="#c8c8c8" stroke-width="1.8"/>
<path d="M469.6 43.5 L476.8 37 V50 Z M477.8 43.5 L485.0 37 V50 Z" fill="#565656"/>
<path d="M499.0 43.5 L506.20000000000005 37 V50 Z" fill="#565656"/>
<path d="M531.2 43.5 L524.0 37 V50 Z" fill="#565656"/>
<path d="M560.6 43.5 L553.4 37 V50 Z M552.4 43.5 L545.2 37 V50 Z" fill="#565656"/>
<circle cx="577.6" cy="43.5" r="7.3" fill="none" stroke="#565656" stroke-width="1.4"/>
<path d="M573.6 43.5 H581.6 M577.6 39.5 V47.5" stroke="#565656" stroke-width="1.9"/>
<circle cx="602.6" cy="43.5" r="7.3" fill="none" stroke="#565656" stroke-width="1.4"/>
<path d="M598.6 43.5 H606.6" stroke="#565656" stroke-width="1.9"/>
<path d="M620.6 37 V49.8 M634.6 37 V49.8" stroke="#565656" stroke-width="1.4"/>
<circle cx="628.6" cy="41.6" r="3.6" fill="none" stroke="#565656" stroke-width="1.7"/>
<path d="M626.0 44.3 L621.1 49" stroke="#565656" stroke-width="1.7"/>
<path d="M652.6 35 V51.8" stroke="#565656" stroke-width="1.6"/>
<path d="M645.1 43.5 H648.6 M660.1 43.5 H656.6" stroke="#565656" stroke-width="1.2"/>
<path d="M651.0 43.5 L647.4 39.2 V47.8 Z M654.2 43.5 L657.8000000000001 39.2 V47.8 Z" fill="#565656"/>
<path d="M677.6 35 V51.8" stroke="#565656" stroke-width="1.2"/>
<rect x="675.4" y="36.5" width="4.4" height="13" fill="#e8e8e8" stroke="#565656" stroke-width="1.3"/>
<path d="M669.6 43.5 H672.6 M685.6 43.5 H682.6" stroke="#565656" stroke-width="1.2"/>
<path d="M674.6 43.5 L671.1 39.2 V47.8 Z M680.6 43.5 L684.1 39.2 V47.8 Z" fill="#565656"/>
<path d="M705.2 43.5 L698.4 36.7 V50.3 Z" fill="#565656"/>
<path d="M706.8000000000001 36.8 V50.2" stroke="#565656" stroke-width="1.3"/>
<path d="M717.3 41.2 L721.5 37 L725.7 41.2 M717.3 45.4 L721.5 41.2 L725.7 45.4" fill="none" stroke="#000" stroke-width="2.4"/>
</svg></body></html>
